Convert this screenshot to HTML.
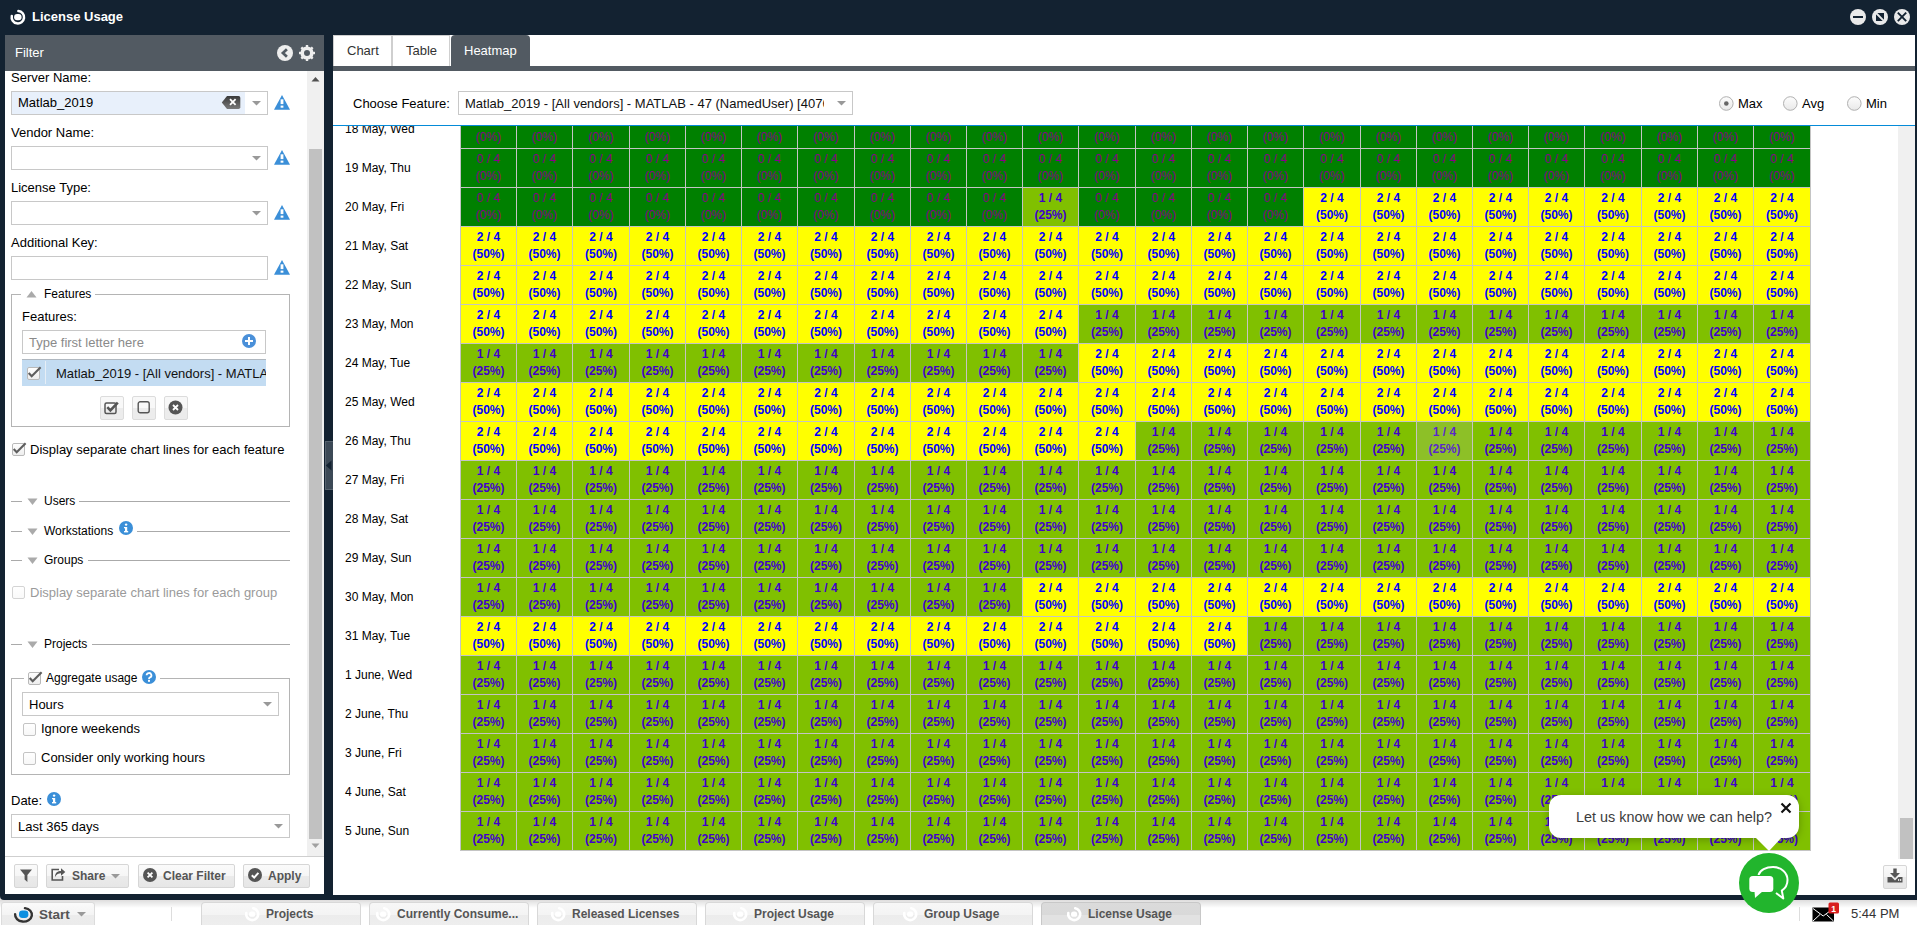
<!DOCTYPE html>
<html><head><meta charset="utf-8"><title>License Usage</title>
<style>
html,body{margin:0;padding:0}
body{width:1917px;height:925px;position:relative;overflow:hidden;background:#132231;font-family:'Liberation Sans', sans-serif}
.t{position:absolute;white-space:nowrap;font-family:'Liberation Sans', sans-serif}
.c{position:absolute;height:38px;text-align:center;font-family:'Liberation Sans', sans-serif;font-size:12px;font-weight:700;line-height:17px;padding-top:2px;box-sizing:border-box}
svg{display:block}
</style></head><body>
<svg style="position:absolute;left:0px;top:0px" width="30" height="30" viewBox="0 0 30 30">
<path d="M18.39 11.02 A6.2 6.2 0 1 1 11.79 15.91" fill="none" stroke="#fff" stroke-width="2.5" stroke-linecap="round"/>
<rect x="14.1" y="13.9" width="7.5" height="6.4" rx="3" fill="#fff"/></svg>
<div class="t" style="left:32px;top:10px;font-size:13px;line-height:13px;font-weight:700;color:#fff;">License Usage</div>
<svg style="position:absolute;left:1850px;top:9px" width="16" height="16" viewBox="0 0 16 16"><circle cx="8" cy="8" r="8" fill="#e9e9e9"/><rect x="3" y="7" width="10" height="2" fill="#132231"/></svg>
<svg style="position:absolute;left:1872px;top:9px" width="16" height="16" viewBox="0 0 16 16"><circle cx="8" cy="8" r="8" fill="#e9e9e9"/><rect x="4" y="4" width="8" height="8" fill="#132231"/><path d="M3 3 L12.6 12.6" stroke="#e9e9e9" stroke-width="1.9"/></svg>
<svg style="position:absolute;left:1894px;top:9px" width="16" height="16" viewBox="0 0 16 16"><circle cx="8" cy="8" r="8" fill="#e9e9e9"/><path d="M3.8 3.6 L12.2 12.2 M12.2 3.6 L3.8 12.2" stroke="#132231" stroke-width="1.9"/></svg>
<div style="position:absolute;left:0px;top:890px;width:12px;height:10px;background:#e4e2e2"></div>
<div style="position:absolute;left:0px;top:870px;width:12px;height:30px;background:#132231;border-bottom-left-radius:4px"></div>
<div style="position:absolute;left:5px;top:35px;width:319px;height:859px;background:#fff"></div>
<div style="position:absolute;left:5px;top:35px;width:319px;height:36px;background:#525a62"></div>
<div class="t" style="left:15px;top:46px;font-size:13px;line-height:13px;font-weight:400;color:#fff;">Filter</div>
<svg style="position:absolute;left:277px;top:45px" width="16" height="16" viewBox="0 0 16 16"><circle cx="8" cy="8" r="8" fill="#eee"/>
<path d="M9.9 4.2 L5.9 8 L9.9 11.8" fill="none" stroke="#525a62" stroke-width="2.7"/></svg>
<svg style="position:absolute;left:299px;top:45px" width="16" height="16" viewBox="0 0 16 16"><rect x="6.8" y="0" width="2.4" height="4" transform="rotate(0 8 8)" fill="#eee"/><rect x="6.8" y="0" width="2.4" height="4" transform="rotate(45 8 8)" fill="#eee"/><rect x="6.8" y="0" width="2.4" height="4" transform="rotate(90 8 8)" fill="#eee"/><rect x="6.8" y="0" width="2.4" height="4" transform="rotate(135 8 8)" fill="#eee"/><rect x="6.8" y="0" width="2.4" height="4" transform="rotate(180 8 8)" fill="#eee"/><rect x="6.8" y="0" width="2.4" height="4" transform="rotate(225 8 8)" fill="#eee"/><rect x="6.8" y="0" width="2.4" height="4" transform="rotate(270 8 8)" fill="#eee"/><rect x="6.8" y="0" width="2.4" height="4" transform="rotate(315 8 8)" fill="#eee"/><circle cx="8" cy="8" r="4.8" fill="none" stroke="#eee" stroke-width="3.6"/></svg>
<div style="position:absolute;left:307px;top:71px;width:17px;height:785px;background:#f0f0f0"></div>
<div style="position:absolute;left:309px;top:149px;width:13px;height:690px;background:#c1c1c1"></div>
<svg style="position:absolute;left:311px;top:76px" width="9" height="6"><path d="M0.5 5.5 L4.5 1 L8.5 5.5z" fill="#505050"/></svg>
<svg style="position:absolute;left:311px;top:843px" width="9" height="6"><path d="M0.5 0.5 L4.5 5 L8.5 0.5z" fill="#a0a0a0"/></svg>
<div class="t" style="left:11px;top:71px;font-size:13px;line-height:13px;font-weight:400;color:#000;">Server Name:</div>
<div style="position:absolute;left:11px;top:91px;width:255px;height:22px;border:1px solid #c8c8c8;background:#fff"></div>
<svg style="position:absolute;left:252px;top:101px" width="9" height="5"><path d="M0 0 L9 0 L4.5 4.5z" fill="#999"/></svg>
<div style="position:absolute;left:12px;top:92px;width:233px;height:22px;background:#e8f0fb"></div>
<div class="t" style="left:18px;top:96px;font-size:13px;line-height:13px;font-weight:400;color:#000;">Matlab_2019</div>
<svg style="position:absolute;left:221px;top:95px" width="20" height="15" viewBox="0 0 20 15">
<defs><linearGradient id="cg" x1="0" y1="0" x2="0" y2="1"><stop offset="0" stop-color="#3a3a3a"/><stop offset="1" stop-color="#7a7a7a"/></linearGradient></defs>
<path d="M6 1 H17.5 a1.8 1.8 0 0 1 1.8 1.8 V12.2 a1.8 1.8 0 0 1 -1.8 1.8 H6 L0.8 7.5z" fill="url(#cg)"/>
<path d="M9 4.2 L14.6 9.8 M14.6 4.2 L9 9.8" stroke="#fff" stroke-width="1.8"/></svg>
<svg style="position:absolute;left:274px;top:95px" width="16" height="16" viewBox="0 0 16 16"><path d="M8 0 L15.9 14.4 Q16 14.8 15.5 14.8 L0.5 14.8 Q0 14.8 0.1 14.4z" fill="#3b8fd8"/><rect x="6.6" y="4.3" width="2.8" height="4.8" fill="#fff"/><rect x="6.6" y="10.6" width="2.8" height="2.1" fill="#fff"/></svg>
<div class="t" style="left:11px;top:126px;font-size:13px;line-height:13px;font-weight:400;color:#000;">Vendor Name:</div>
<div style="position:absolute;left:11px;top:146px;width:255px;height:22px;border:1px solid #c8c8c8;background:#fff"></div>
<svg style="position:absolute;left:252px;top:156px" width="9" height="5"><path d="M0 0 L9 0 L4.5 4.5z" fill="#999"/></svg>
<svg style="position:absolute;left:274px;top:150px" width="16" height="16" viewBox="0 0 16 16"><path d="M8 0 L15.9 14.4 Q16 14.8 15.5 14.8 L0.5 14.8 Q0 14.8 0.1 14.4z" fill="#3b8fd8"/><rect x="6.6" y="4.3" width="2.8" height="4.8" fill="#fff"/><rect x="6.6" y="10.6" width="2.8" height="2.1" fill="#fff"/></svg>
<div class="t" style="left:11px;top:181px;font-size:13px;line-height:13px;font-weight:400;color:#000;">License Type:</div>
<div style="position:absolute;left:11px;top:201px;width:255px;height:22px;border:1px solid #c8c8c8;background:#fff"></div>
<svg style="position:absolute;left:252px;top:211px" width="9" height="5"><path d="M0 0 L9 0 L4.5 4.5z" fill="#999"/></svg>
<svg style="position:absolute;left:274px;top:205px" width="16" height="16" viewBox="0 0 16 16"><path d="M8 0 L15.9 14.4 Q16 14.8 15.5 14.8 L0.5 14.8 Q0 14.8 0.1 14.4z" fill="#3b8fd8"/><rect x="6.6" y="4.3" width="2.8" height="4.8" fill="#fff"/><rect x="6.6" y="10.6" width="2.8" height="2.1" fill="#fff"/></svg>
<div class="t" style="left:11px;top:236px;font-size:13px;line-height:13px;font-weight:400;color:#000;">Additional Key:</div>
<div style="position:absolute;left:11px;top:256px;width:255px;height:22px;border:1px solid #c8c8c8;background:#fff"></div>
<svg style="position:absolute;left:274px;top:260px" width="16" height="16" viewBox="0 0 16 16"><path d="M8 0 L15.9 14.4 Q16 14.8 15.5 14.8 L0.5 14.8 Q0 14.8 0.1 14.4z" fill="#3b8fd8"/><rect x="6.6" y="4.3" width="2.8" height="4.8" fill="#fff"/><rect x="6.6" y="10.6" width="2.8" height="2.1" fill="#fff"/></svg>
<div style="position:absolute;left:11px;top:294px;width:277px;height:131px;border:1px solid #b4b4b4"></div>
<div style="position:absolute;left:21px;top:290px;width:74px;height:8px;background:#fff"></div>
<svg style="position:absolute;left:26px;top:290px" width="11" height="8"><path d="M0.5 7.5 L5.5 1 L10.5 7.5z" fill="#aaa"/></svg>
<div class="t" style="left:44px;top:288px;font-size:12px;line-height:12px;font-weight:400;color:#000;">Features</div>
<div class="t" style="left:22px;top:310px;font-size:13px;line-height:13px;font-weight:400;color:#000;">Features:</div>
<div style="position:absolute;left:22px;top:330px;width:242px;height:22px;border:1px solid #c8c8c8;background:#fff"></div>
<div class="t" style="left:29px;top:336px;font-size:13px;line-height:13px;font-weight:400;color:#8a8a8a;">Type first letter here</div>
<svg style="position:absolute;left:242px;top:334px" width="14" height="14" viewBox="0 0 14 14"><circle cx="7" cy="7" r="7" fill="#4a90d9"/><rect x="6" y="3" width="2" height="8" fill="#fff"/><rect x="3" y="6" width="8" height="2" fill="#fff"/></svg>
<div style="position:absolute;left:22px;top:359px;width:244px;height:27px;background:#c3dcf2;border-top:1px solid #b0b8c0;box-sizing:border-box"></div>
<div style="position:absolute;left:45px;top:361px;width:1px;height:23px;background:#e6eef6"></div>
<div style="position:absolute;left:22px;top:359px;width:244px;height:27px;overflow:hidden"><div class="t" style="left:34px;top:8px;font-size:13px;line-height:13px;color:#111">Matlab_2019 - [All vendors] - MATLAB - 47 (NamedUser)</div></div>
<svg style="position:absolute;left:27px;top:365px" width="15" height="15" viewBox="0 0 15 15"><defs><linearGradient id="cbg27_367" x1="0" y1="0" x2="0" y2="1"><stop offset="0" stop-color="#fff"/><stop offset="1" stop-color="#ededed"/></linearGradient></defs><rect x="0.5" y="2.5" width="12" height="12" rx="1.5" fill="url(#cbg27_367)" stroke="#b9b9b9"/><path d="M1.7 8 L4.7 11.3 L13.6 2.3" fill="none" stroke="#5e5e5e" stroke-width="2.1"/></svg>
<div style="position:absolute;left:100px;top:396px;width:22px;height:22px;border:1px solid #dcdcdc;border-radius:2px;background:linear-gradient(#f8f8f8,#f8f8f8 50%,#ececec 50%,#ececec)"></div>
<svg style="position:absolute;left:104px;top:400px" width="16" height="15" viewBox="0 0 16 15"><rect x="1" y="3" width="11" height="10.5" rx="1.5" fill="none" stroke="#555" stroke-width="1.5"/><path d="M3.3 7.2 L6.4 10.4 L13.8 2.6" fill="none" stroke="#555" stroke-width="2.6"/></svg>
<div style="position:absolute;left:132px;top:396px;width:22px;height:22px;border:1px solid #dcdcdc;border-radius:2px;background:linear-gradient(#f8f8f8,#f8f8f8 50%,#ececec 50%,#ececec)"></div>
<svg style="position:absolute;left:137px;top:401px" width="14" height="14" viewBox="0 0 14 14"><rect x="1.2" y="0.8" width="11" height="11" rx="2" fill="none" stroke="#555" stroke-width="1.4"/></svg>
<div style="position:absolute;left:164px;top:396px;width:22px;height:22px;border:1px solid #dcdcdc;border-radius:2px;background:linear-gradient(#f8f8f8,#f8f8f8 50%,#ececec 50%,#ececec)"></div>
<svg style="position:absolute;left:168px;top:400px" width="15" height="15" viewBox="0 0 15 15"><circle cx="7.5" cy="7.5" r="7" fill="#555"/><path d="M5 5 L10 10 M10 5 L5 10" stroke="#fff" stroke-width="1.8"/></svg>
<svg style="position:absolute;left:12px;top:441px" width="15" height="15" viewBox="0 0 15 15"><defs><linearGradient id="cbg12_443" x1="0" y1="0" x2="0" y2="1"><stop offset="0" stop-color="#fff"/><stop offset="1" stop-color="#ededed"/></linearGradient></defs><rect x="0.5" y="2.5" width="12" height="12" rx="1.5" fill="url(#cbg12_443)" stroke="#b9b9b9"/><path d="M1.7 8 L4.7 11.3 L13.6 2.3" fill="none" stroke="#5e5e5e" stroke-width="2.1"/></svg>
<div class="t" style="left:30px;top:443px;font-size:13px;line-height:13px;font-weight:400;color:#000;">Display separate chart lines for each feature</div>
<div style="position:absolute;left:11px;top:501px;width:11px;height:1px;background:#aaa"></div>
<svg style="position:absolute;left:27px;top:498px" width="11" height="8"><path d="M0.5 0.5 L10.5 0.5 L5.5 7z" fill="#aaa"/></svg>
<div class="t" style="left:44px;top:495px;font-size:12px;line-height:12px;font-weight:400;color:#000;">Users</div>
<div style="position:absolute;left:79px;top:501px;width:211px;height:1px;background:#aaa"></div>
<div style="position:absolute;left:11px;top:531px;width:11px;height:1px;background:#aaa"></div>
<svg style="position:absolute;left:27px;top:528px" width="11" height="8"><path d="M0.5 0.5 L10.5 0.5 L5.5 7z" fill="#aaa"/></svg>
<div class="t" style="left:44px;top:525px;font-size:12px;line-height:12px;font-weight:400;color:#000;">Workstations</div>
<svg style="position:absolute;left:119px;top:521px" width="14" height="14" viewBox="0 0 14 14"><circle cx="7" cy="7" r="7" fill="#3b8fd8"/><rect x="6" y="6" width="2.2" height="5" fill="#fff"/><rect x="5" y="10" width="4.2" height="1.4" fill="#fff"/><rect x="5" y="6" width="3" height="1.3" fill="#fff"/><circle cx="7.1" cy="3.6" r="1.2" fill="#fff"/></svg>
<div style="position:absolute;left:137px;top:531px;width:153px;height:1px;background:#aaa"></div>
<div style="position:absolute;left:11px;top:560px;width:11px;height:1px;background:#aaa"></div>
<svg style="position:absolute;left:27px;top:557px" width="11" height="8"><path d="M0.5 0.5 L10.5 0.5 L5.5 7z" fill="#aaa"/></svg>
<div class="t" style="left:44px;top:554px;font-size:12px;line-height:12px;font-weight:400;color:#000;">Groups</div>
<div style="position:absolute;left:88px;top:560px;width:202px;height:1px;background:#aaa"></div>
<svg style="position:absolute;left:12px;top:584px" width="15" height="15" viewBox="0 0 15 15"><defs><linearGradient id="cbg12_586" x1="0" y1="0" x2="0" y2="1"><stop offset="0" stop-color="#fff"/><stop offset="1" stop-color="#f9f9f9"/></linearGradient></defs><rect x="0.5" y="2.5" width="12" height="12" rx="1.5" fill="url(#cbg12_586)" stroke="#d4d4d4"/></svg>
<div class="t" style="left:30px;top:586px;font-size:13px;line-height:13px;font-weight:400;color:#9a9a9a;">Display separate chart lines for each group</div>
<div style="position:absolute;left:11px;top:644px;width:11px;height:1px;background:#aaa"></div>
<svg style="position:absolute;left:27px;top:641px" width="11" height="8"><path d="M0.5 0.5 L10.5 0.5 L5.5 7z" fill="#aaa"/></svg>
<div class="t" style="left:44px;top:638px;font-size:12px;line-height:12px;font-weight:400;color:#000;">Projects</div>
<div style="position:absolute;left:92px;top:644px;width:198px;height:1px;background:#aaa"></div>
<div style="position:absolute;left:11px;top:678px;width:277px;height:95px;border:1px solid #b4b4b4"></div>
<div style="position:absolute;left:24px;top:670px;width:136px;height:16px;background:#fff"></div>
<svg style="position:absolute;left:28px;top:670px" width="15" height="15" viewBox="0 0 15 15"><defs><linearGradient id="cbg28_672" x1="0" y1="0" x2="0" y2="1"><stop offset="0" stop-color="#fff"/><stop offset="1" stop-color="#ededed"/></linearGradient></defs><rect x="0.5" y="2.5" width="12" height="12" rx="1.5" fill="url(#cbg28_672)" stroke="#b9b9b9"/><path d="M1.7 8 L4.7 11.3 L13.6 2.3" fill="none" stroke="#5e5e5e" stroke-width="2.1"/></svg>
<div class="t" style="left:46px;top:672px;font-size:12px;line-height:12px;font-weight:400;color:#000;">Aggregate usage</div>
<svg style="position:absolute;left:142px;top:670px" width="14" height="14" viewBox="0 0 14 14"><circle cx="7" cy="7" r="7" fill="#3b8fd8"/><path d="M4.6 5.3 a2.4 2.3 0 1 1 3.4 2.1 c-0.8 0.4 -1 0.8 -1 1.6" fill="none" stroke="#fff" stroke-width="1.8"/><rect x="6" y="9.8" width="2" height="2" fill="#fff"/></svg>
<div style="position:absolute;left:22px;top:692px;width:255px;height:22px;border:1px solid #c8c8c8;background:#fff"></div>
<svg style="position:absolute;left:263px;top:702px" width="9" height="5"><path d="M0 0 L9 0 L4.5 4.5z" fill="#999"/></svg>
<div class="t" style="left:29px;top:698px;font-size:13px;line-height:13px;font-weight:400;color:#000;">Hours</div>
<svg style="position:absolute;left:23px;top:721px" width="15" height="15" viewBox="0 0 15 15"><defs><linearGradient id="cbg23_723" x1="0" y1="0" x2="0" y2="1"><stop offset="0" stop-color="#fff"/><stop offset="1" stop-color="#f7f7f7"/></linearGradient></defs><rect x="0.5" y="2.5" width="12" height="12" rx="1.5" fill="url(#cbg23_723)" stroke="#c4c4c4"/></svg>
<div class="t" style="left:41px;top:722px;font-size:13px;line-height:13px;font-weight:400;color:#000;">Ignore weekends</div>
<svg style="position:absolute;left:23px;top:750px" width="15" height="15" viewBox="0 0 15 15"><defs><linearGradient id="cbg23_752" x1="0" y1="0" x2="0" y2="1"><stop offset="0" stop-color="#fff"/><stop offset="1" stop-color="#f7f7f7"/></linearGradient></defs><rect x="0.5" y="2.5" width="12" height="12" rx="1.5" fill="url(#cbg23_752)" stroke="#c4c4c4"/></svg>
<div class="t" style="left:41px;top:751px;font-size:13px;line-height:13px;font-weight:400;color:#000;">Consider only working hours</div>
<div class="t" style="left:11px;top:794px;font-size:13px;line-height:13px;font-weight:400;color:#000;">Date:</div>
<svg style="position:absolute;left:47px;top:792px" width="14" height="14" viewBox="0 0 14 14"><circle cx="7" cy="7" r="7" fill="#3b8fd8"/><rect x="6" y="6" width="2.2" height="5" fill="#fff"/><rect x="5" y="10" width="4.2" height="1.4" fill="#fff"/><rect x="5" y="6" width="3" height="1.3" fill="#fff"/><circle cx="7.1" cy="3.6" r="1.2" fill="#fff"/></svg>
<div style="position:absolute;left:11px;top:814px;width:277px;height:22px;border:1px solid #c8c8c8;background:#fff"></div>
<svg style="position:absolute;left:274px;top:824px" width="9" height="5"><path d="M0 0 L9 0 L4.5 4.5z" fill="#999"/></svg>
<div class="t" style="left:18px;top:820px;font-size:13px;line-height:13px;font-weight:400;color:#000;">Last 365 days</div>
<div style="position:absolute;left:5px;top:856px;width:319px;height:1px;background:#cfcfcf"></div>
<div style="position:absolute;left:14px;top:864px;width:22px;height:22px;border:1px solid #d6d6d6;border-radius:2px;background:linear-gradient(#fafafa,#f6f6f6 50%,#ebebeb 50%,#e6e6e6)"></div>
<svg style="position:absolute;left:19px;top:868px" width="14" height="15" viewBox="0 0 14 15"><path d="M1 1.5 H13 L8.4 7 V14 L5.6 11.4 V7z" fill="#555"/></svg>
<div style="position:absolute;left:46px;top:864px;width:81px;height:22px;border:1px solid #d6d6d6;border-radius:2px;background:linear-gradient(#fafafa,#f6f6f6 50%,#ebebeb 50%,#e6e6e6)"></div>
<svg style="position:absolute;left:50px;top:866px" width="16" height="16" viewBox="0 0 16 16"><path d="M9 3.5 H2.2 V14 H12.5 V10" fill="none" stroke="#555" stroke-width="1.6"/><path d="M5 11 C5 6.5 8 5 11 5 V2.3 L15.3 6 L11 9.7 V7.2 C8.5 7.2 6.5 8 5 11z" fill="#555"/></svg>
<div class="t" style="left:72px;top:870px;font-size:12px;line-height:12px;font-weight:700;color:#555;">Share</div>
<svg style="position:absolute;left:111px;top:874px" width="9" height="5"><path d="M0 0 L9 0 L4.5 4.5z" fill="#999"/></svg>
<div style="position:absolute;left:138px;top:864px;width:95px;height:22px;border:1px solid #d6d6d6;border-radius:2px;background:linear-gradient(#fafafa,#f6f6f6 50%,#ebebeb 50%,#e6e6e6)"></div>
<svg style="position:absolute;left:143px;top:868px" width="14" height="14" viewBox="0 0 14 14"><circle cx="7" cy="7" r="7" fill="#555"/><path d="M4.6 4.6 L9.4 9.4 M9.4 4.6 L4.6 9.4" stroke="#fff" stroke-width="1.8"/></svg>
<div class="t" style="left:163px;top:870px;font-size:12px;line-height:12px;font-weight:700;color:#555;">Clear Filter</div>
<div style="position:absolute;left:243px;top:864px;width:65px;height:22px;border:1px solid #d6d6d6;border-radius:2px;background:linear-gradient(#fafafa,#f6f6f6 50%,#ebebeb 50%,#e6e6e6)"></div>
<svg style="position:absolute;left:248px;top:868px" width="14" height="14" viewBox="0 0 14 14"><circle cx="7" cy="7" r="7" fill="#555"/><path d="M3.8 7.2 L6.2 9.6 L10.4 4.8" fill="none" stroke="#fff" stroke-width="2"/></svg>
<div class="t" style="left:268px;top:870px;font-size:12px;line-height:12px;font-weight:700;color:#555;">Apply</div>
<div style="position:absolute;left:325px;top:441px;width:7px;height:47px;background:#3c4956;border:1px solid #56626e;border-right:none"></div>
<svg style="position:absolute;left:325px;top:460px" width="7" height="11"><path d="M6.5 0.5 L0.8 5.5 L6.5 10.5z" fill="#132231"/></svg>
<div style="position:absolute;left:333px;top:35px;width:1582px;height:860px;background:#fff"></div>
<div style="position:absolute;left:333px;top:35px;width:57px;height:31px;border:1px solid #cfcfcf;border-bottom:none;background:#fff"></div>
<div class="t" style="left:347px;top:44px;font-size:13px;line-height:13px;font-weight:400;color:#333;">Chart</div>
<div style="position:absolute;left:392px;top:35px;width:56px;height:31px;border:1px solid #cfcfcf;border-bottom:none;background:#fff"></div>
<div class="t" style="left:406px;top:44px;font-size:13px;line-height:13px;font-weight:400;color:#333;">Table</div>
<div style="position:absolute;left:451px;top:35px;width:79px;height:31px;background:#525a62;border-radius:4px 4px 0 0"></div>
<div class="t" style="left:464px;top:44px;font-size:13px;line-height:13px;font-weight:400;color:#fff;">Heatmap</div>
<div style="position:absolute;left:333px;top:66px;width:1582px;height:5px;background:#525a62"></div>
<div class="t" style="left:353px;top:97px;font-size:13px;line-height:13px;font-weight:400;color:#000;">Choose Feature:</div>
<div style="position:absolute;left:458px;top:91px;width:393px;height:22px;border:1px solid #c8c8c8;background:#fff"></div>
<div style="position:absolute;left:459px;top:92px;width:365px;height:22px;overflow:hidden"><div class="t" style="left:6px;top:5px;font-size:13px;line-height:13px;color:#111">Matlab_2019 - [All vendors] - MATLAB - 47 (NamedUser) [4076]</div></div>
<svg style="position:absolute;left:837px;top:101px" width="9" height="5"><path d="M0 0 L9 0 L4.5 4.5z" fill="#999"/></svg>
<svg style="position:absolute;left:1719px;top:96px" width="15" height="15" viewBox="0 0 15 15"><defs><linearGradient id="rg" x1="0" y1="0" x2="0" y2="1"><stop offset="0" stop-color="#fdfdfd"/><stop offset="1" stop-color="#e9e9e9"/></linearGradient></defs><circle cx="7.3" cy="7.5" r="6.8" fill="url(#rg)" stroke="#b0b0b0"/><circle cx="7.3" cy="7.5" r="2.3" fill="#666"/></svg>
<div class="t" style="left:1738px;top:97px;font-size:13px;line-height:13px;font-weight:400;color:#000;">Max</div>
<svg style="position:absolute;left:1783px;top:96px" width="15" height="15" viewBox="0 0 15 15"><defs><linearGradient id="rg" x1="0" y1="0" x2="0" y2="1"><stop offset="0" stop-color="#fdfdfd"/><stop offset="1" stop-color="#e9e9e9"/></linearGradient></defs><circle cx="7.3" cy="7.5" r="6.8" fill="url(#rg)" stroke="#b0b0b0"/></svg>
<div class="t" style="left:1802px;top:97px;font-size:13px;line-height:13px;font-weight:400;color:#000;">Avg</div>
<svg style="position:absolute;left:1847px;top:96px" width="15" height="15" viewBox="0 0 15 15"><defs><linearGradient id="rg" x1="0" y1="0" x2="0" y2="1"><stop offset="0" stop-color="#fdfdfd"/><stop offset="1" stop-color="#e9e9e9"/></linearGradient></defs><circle cx="7.3" cy="7.5" r="6.8" fill="url(#rg)" stroke="#b0b0b0"/></svg>
<div class="t" style="left:1866px;top:97px;font-size:13px;line-height:13px;font-weight:400;color:#000;">Min</div>
<div style="position:absolute;left:333px;top:125px;width:1582px;height:1px;background:#058bd8"></div>
<div style="position:absolute;left:333px;top:126px;width:1582px;height:733px;overflow:hidden">
<div style="position:absolute;left:127px;top:-17px;width:1351px;height:742px;background:#c4c4c4"></div>
<div class="t" style="left:12px;top:-3px;font-size:12px;line-height:12px;font-weight:400;color:#000;">18 May, Wed</div>
<div class="c" style="left:128px;top:-16px;width:55px;background:#008000;color:#8a008a;font-weight:400">0 / 4<br>(0%)</div>
<div class="c" style="left:184px;top:-16px;width:55px;background:#008000;color:#8a008a;font-weight:400">0 / 4<br>(0%)</div>
<div class="c" style="left:240px;top:-16px;width:56px;background:#008000;color:#8a008a;font-weight:400">0 / 4<br>(0%)</div>
<div class="c" style="left:297px;top:-16px;width:55px;background:#008000;color:#8a008a;font-weight:400">0 / 4<br>(0%)</div>
<div class="c" style="left:353px;top:-16px;width:55px;background:#008000;color:#8a008a;font-weight:400">0 / 4<br>(0%)</div>
<div class="c" style="left:409px;top:-16px;width:55px;background:#008000;color:#8a008a;font-weight:400">0 / 4<br>(0%)</div>
<div class="c" style="left:465px;top:-16px;width:56px;background:#008000;color:#8a008a;font-weight:400">0 / 4<br>(0%)</div>
<div class="c" style="left:522px;top:-16px;width:55px;background:#008000;color:#8a008a;font-weight:400">0 / 4<br>(0%)</div>
<div class="c" style="left:578px;top:-16px;width:55px;background:#008000;color:#8a008a;font-weight:400">0 / 4<br>(0%)</div>
<div class="c" style="left:634px;top:-16px;width:55px;background:#008000;color:#8a008a;font-weight:400">0 / 4<br>(0%)</div>
<div class="c" style="left:690px;top:-16px;width:55px;background:#008000;color:#8a008a;font-weight:400">0 / 4<br>(0%)</div>
<div class="c" style="left:746px;top:-16px;width:56px;background:#008000;color:#8a008a;font-weight:400">0 / 4<br>(0%)</div>
<div class="c" style="left:803px;top:-16px;width:55px;background:#008000;color:#8a008a;font-weight:400">0 / 4<br>(0%)</div>
<div class="c" style="left:859px;top:-16px;width:55px;background:#008000;color:#8a008a;font-weight:400">0 / 4<br>(0%)</div>
<div class="c" style="left:915px;top:-16px;width:55px;background:#008000;color:#8a008a;font-weight:400">0 / 4<br>(0%)</div>
<div class="c" style="left:971px;top:-16px;width:56px;background:#008000;color:#8a008a;font-weight:400">0 / 4<br>(0%)</div>
<div class="c" style="left:1028px;top:-16px;width:55px;background:#008000;color:#8a008a;font-weight:400">0 / 4<br>(0%)</div>
<div class="c" style="left:1084px;top:-16px;width:55px;background:#008000;color:#8a008a;font-weight:400">0 / 4<br>(0%)</div>
<div class="c" style="left:1140px;top:-16px;width:55px;background:#008000;color:#8a008a;font-weight:400">0 / 4<br>(0%)</div>
<div class="c" style="left:1196px;top:-16px;width:55px;background:#008000;color:#8a008a;font-weight:400">0 / 4<br>(0%)</div>
<div class="c" style="left:1252px;top:-16px;width:56px;background:#008000;color:#8a008a;font-weight:400">0 / 4<br>(0%)</div>
<div class="c" style="left:1309px;top:-16px;width:55px;background:#008000;color:#8a008a;font-weight:400">0 / 4<br>(0%)</div>
<div class="c" style="left:1365px;top:-16px;width:55px;background:#008000;color:#8a008a;font-weight:400">0 / 4<br>(0%)</div>
<div class="c" style="left:1421px;top:-16px;width:56px;background:#008000;color:#8a008a;font-weight:400">0 / 4<br>(0%)</div>
<div class="t" style="left:12px;top:36px;font-size:12px;line-height:12px;font-weight:400;color:#000;">19 May, Thu</div>
<div class="c" style="left:128px;top:23px;width:55px;background:#008000;color:#8a008a;font-weight:400">0 / 4<br>(0%)</div>
<div class="c" style="left:184px;top:23px;width:55px;background:#008000;color:#8a008a;font-weight:400">0 / 4<br>(0%)</div>
<div class="c" style="left:240px;top:23px;width:56px;background:#008000;color:#8a008a;font-weight:400">0 / 4<br>(0%)</div>
<div class="c" style="left:297px;top:23px;width:55px;background:#008000;color:#8a008a;font-weight:400">0 / 4<br>(0%)</div>
<div class="c" style="left:353px;top:23px;width:55px;background:#008000;color:#8a008a;font-weight:400">0 / 4<br>(0%)</div>
<div class="c" style="left:409px;top:23px;width:55px;background:#008000;color:#8a008a;font-weight:400">0 / 4<br>(0%)</div>
<div class="c" style="left:465px;top:23px;width:56px;background:#008000;color:#8a008a;font-weight:400">0 / 4<br>(0%)</div>
<div class="c" style="left:522px;top:23px;width:55px;background:#008000;color:#8a008a;font-weight:400">0 / 4<br>(0%)</div>
<div class="c" style="left:578px;top:23px;width:55px;background:#008000;color:#8a008a;font-weight:400">0 / 4<br>(0%)</div>
<div class="c" style="left:634px;top:23px;width:55px;background:#008000;color:#8a008a;font-weight:400">0 / 4<br>(0%)</div>
<div class="c" style="left:690px;top:23px;width:55px;background:#008000;color:#8a008a;font-weight:400">0 / 4<br>(0%)</div>
<div class="c" style="left:746px;top:23px;width:56px;background:#008000;color:#8a008a;font-weight:400">0 / 4<br>(0%)</div>
<div class="c" style="left:803px;top:23px;width:55px;background:#008000;color:#8a008a;font-weight:400">0 / 4<br>(0%)</div>
<div class="c" style="left:859px;top:23px;width:55px;background:#008000;color:#8a008a;font-weight:400">0 / 4<br>(0%)</div>
<div class="c" style="left:915px;top:23px;width:55px;background:#008000;color:#8a008a;font-weight:400">0 / 4<br>(0%)</div>
<div class="c" style="left:971px;top:23px;width:56px;background:#008000;color:#8a008a;font-weight:400">0 / 4<br>(0%)</div>
<div class="c" style="left:1028px;top:23px;width:55px;background:#008000;color:#8a008a;font-weight:400">0 / 4<br>(0%)</div>
<div class="c" style="left:1084px;top:23px;width:55px;background:#008000;color:#8a008a;font-weight:400">0 / 4<br>(0%)</div>
<div class="c" style="left:1140px;top:23px;width:55px;background:#008000;color:#8a008a;font-weight:400">0 / 4<br>(0%)</div>
<div class="c" style="left:1196px;top:23px;width:55px;background:#008000;color:#8a008a;font-weight:400">0 / 4<br>(0%)</div>
<div class="c" style="left:1252px;top:23px;width:56px;background:#008000;color:#8a008a;font-weight:400">0 / 4<br>(0%)</div>
<div class="c" style="left:1309px;top:23px;width:55px;background:#008000;color:#8a008a;font-weight:400">0 / 4<br>(0%)</div>
<div class="c" style="left:1365px;top:23px;width:55px;background:#008000;color:#8a008a;font-weight:400">0 / 4<br>(0%)</div>
<div class="c" style="left:1421px;top:23px;width:56px;background:#008000;color:#8a008a;font-weight:400">0 / 4<br>(0%)</div>
<div class="t" style="left:12px;top:75px;font-size:12px;line-height:12px;font-weight:400;color:#000;">20 May, Fri</div>
<div class="c" style="left:128px;top:62px;width:55px;background:#008000;color:#8a008a;font-weight:400">0 / 4<br>(0%)</div>
<div class="c" style="left:184px;top:62px;width:55px;background:#008000;color:#8a008a;font-weight:400">0 / 4<br>(0%)</div>
<div class="c" style="left:240px;top:62px;width:56px;background:#008000;color:#8a008a;font-weight:400">0 / 4<br>(0%)</div>
<div class="c" style="left:297px;top:62px;width:55px;background:#008000;color:#8a008a;font-weight:400">0 / 4<br>(0%)</div>
<div class="c" style="left:353px;top:62px;width:55px;background:#008000;color:#8a008a;font-weight:400">0 / 4<br>(0%)</div>
<div class="c" style="left:409px;top:62px;width:55px;background:#008000;color:#8a008a;font-weight:400">0 / 4<br>(0%)</div>
<div class="c" style="left:465px;top:62px;width:56px;background:#008000;color:#8a008a;font-weight:400">0 / 4<br>(0%)</div>
<div class="c" style="left:522px;top:62px;width:55px;background:#008000;color:#8a008a;font-weight:400">0 / 4<br>(0%)</div>
<div class="c" style="left:578px;top:62px;width:55px;background:#008000;color:#8a008a;font-weight:400">0 / 4<br>(0%)</div>
<div class="c" style="left:634px;top:62px;width:55px;background:#008000;color:#8a008a;font-weight:400">0 / 4<br>(0%)</div>
<div class="c" style="left:690px;top:62px;width:55px;background:#80c000;color:#4000cc">1 / 4<br>(25%)</div>
<div class="c" style="left:746px;top:62px;width:56px;background:#008000;color:#8a008a;font-weight:400">0 / 4<br>(0%)</div>
<div class="c" style="left:803px;top:62px;width:55px;background:#008000;color:#8a008a;font-weight:400">0 / 4<br>(0%)</div>
<div class="c" style="left:859px;top:62px;width:55px;background:#008000;color:#8a008a;font-weight:400">0 / 4<br>(0%)</div>
<div class="c" style="left:915px;top:62px;width:55px;background:#008000;color:#8a008a;font-weight:400">0 / 4<br>(0%)</div>
<div class="c" style="left:971px;top:62px;width:56px;background:#ffff00;color:#0000ff">2 / 4<br>(50%)</div>
<div class="c" style="left:1028px;top:62px;width:55px;background:#ffff00;color:#0000ff">2 / 4<br>(50%)</div>
<div class="c" style="left:1084px;top:62px;width:55px;background:#ffff00;color:#0000ff">2 / 4<br>(50%)</div>
<div class="c" style="left:1140px;top:62px;width:55px;background:#ffff00;color:#0000ff">2 / 4<br>(50%)</div>
<div class="c" style="left:1196px;top:62px;width:55px;background:#ffff00;color:#0000ff">2 / 4<br>(50%)</div>
<div class="c" style="left:1252px;top:62px;width:56px;background:#ffff00;color:#0000ff">2 / 4<br>(50%)</div>
<div class="c" style="left:1309px;top:62px;width:55px;background:#ffff00;color:#0000ff">2 / 4<br>(50%)</div>
<div class="c" style="left:1365px;top:62px;width:55px;background:#ffff00;color:#0000ff">2 / 4<br>(50%)</div>
<div class="c" style="left:1421px;top:62px;width:56px;background:#ffff00;color:#0000ff">2 / 4<br>(50%)</div>
<div class="t" style="left:12px;top:114px;font-size:12px;line-height:12px;font-weight:400;color:#000;">21 May, Sat</div>
<div class="c" style="left:128px;top:101px;width:55px;background:#ffff00;color:#0000ff">2 / 4<br>(50%)</div>
<div class="c" style="left:184px;top:101px;width:55px;background:#ffff00;color:#0000ff">2 / 4<br>(50%)</div>
<div class="c" style="left:240px;top:101px;width:56px;background:#ffff00;color:#0000ff">2 / 4<br>(50%)</div>
<div class="c" style="left:297px;top:101px;width:55px;background:#ffff00;color:#0000ff">2 / 4<br>(50%)</div>
<div class="c" style="left:353px;top:101px;width:55px;background:#ffff00;color:#0000ff">2 / 4<br>(50%)</div>
<div class="c" style="left:409px;top:101px;width:55px;background:#ffff00;color:#0000ff">2 / 4<br>(50%)</div>
<div class="c" style="left:465px;top:101px;width:56px;background:#ffff00;color:#0000ff">2 / 4<br>(50%)</div>
<div class="c" style="left:522px;top:101px;width:55px;background:#ffff00;color:#0000ff">2 / 4<br>(50%)</div>
<div class="c" style="left:578px;top:101px;width:55px;background:#ffff00;color:#0000ff">2 / 4<br>(50%)</div>
<div class="c" style="left:634px;top:101px;width:55px;background:#ffff00;color:#0000ff">2 / 4<br>(50%)</div>
<div class="c" style="left:690px;top:101px;width:55px;background:#ffff00;color:#0000ff">2 / 4<br>(50%)</div>
<div class="c" style="left:746px;top:101px;width:56px;background:#ffff00;color:#0000ff">2 / 4<br>(50%)</div>
<div class="c" style="left:803px;top:101px;width:55px;background:#ffff00;color:#0000ff">2 / 4<br>(50%)</div>
<div class="c" style="left:859px;top:101px;width:55px;background:#ffff00;color:#0000ff">2 / 4<br>(50%)</div>
<div class="c" style="left:915px;top:101px;width:55px;background:#ffff00;color:#0000ff">2 / 4<br>(50%)</div>
<div class="c" style="left:971px;top:101px;width:56px;background:#ffff00;color:#0000ff">2 / 4<br>(50%)</div>
<div class="c" style="left:1028px;top:101px;width:55px;background:#ffff00;color:#0000ff">2 / 4<br>(50%)</div>
<div class="c" style="left:1084px;top:101px;width:55px;background:#ffff00;color:#0000ff">2 / 4<br>(50%)</div>
<div class="c" style="left:1140px;top:101px;width:55px;background:#ffff00;color:#0000ff">2 / 4<br>(50%)</div>
<div class="c" style="left:1196px;top:101px;width:55px;background:#ffff00;color:#0000ff">2 / 4<br>(50%)</div>
<div class="c" style="left:1252px;top:101px;width:56px;background:#ffff00;color:#0000ff">2 / 4<br>(50%)</div>
<div class="c" style="left:1309px;top:101px;width:55px;background:#ffff00;color:#0000ff">2 / 4<br>(50%)</div>
<div class="c" style="left:1365px;top:101px;width:55px;background:#ffff00;color:#0000ff">2 / 4<br>(50%)</div>
<div class="c" style="left:1421px;top:101px;width:56px;background:#ffff00;color:#0000ff">2 / 4<br>(50%)</div>
<div class="t" style="left:12px;top:153px;font-size:12px;line-height:12px;font-weight:400;color:#000;">22 May, Sun</div>
<div class="c" style="left:128px;top:140px;width:55px;background:#ffff00;color:#0000ff">2 / 4<br>(50%)</div>
<div class="c" style="left:184px;top:140px;width:55px;background:#ffff00;color:#0000ff">2 / 4<br>(50%)</div>
<div class="c" style="left:240px;top:140px;width:56px;background:#ffff00;color:#0000ff">2 / 4<br>(50%)</div>
<div class="c" style="left:297px;top:140px;width:55px;background:#ffff00;color:#0000ff">2 / 4<br>(50%)</div>
<div class="c" style="left:353px;top:140px;width:55px;background:#ffff00;color:#0000ff">2 / 4<br>(50%)</div>
<div class="c" style="left:409px;top:140px;width:55px;background:#ffff00;color:#0000ff">2 / 4<br>(50%)</div>
<div class="c" style="left:465px;top:140px;width:56px;background:#ffff00;color:#0000ff">2 / 4<br>(50%)</div>
<div class="c" style="left:522px;top:140px;width:55px;background:#ffff00;color:#0000ff">2 / 4<br>(50%)</div>
<div class="c" style="left:578px;top:140px;width:55px;background:#ffff00;color:#0000ff">2 / 4<br>(50%)</div>
<div class="c" style="left:634px;top:140px;width:55px;background:#ffff00;color:#0000ff">2 / 4<br>(50%)</div>
<div class="c" style="left:690px;top:140px;width:55px;background:#ffff00;color:#0000ff">2 / 4<br>(50%)</div>
<div class="c" style="left:746px;top:140px;width:56px;background:#ffff00;color:#0000ff">2 / 4<br>(50%)</div>
<div class="c" style="left:803px;top:140px;width:55px;background:#ffff00;color:#0000ff">2 / 4<br>(50%)</div>
<div class="c" style="left:859px;top:140px;width:55px;background:#ffff00;color:#0000ff">2 / 4<br>(50%)</div>
<div class="c" style="left:915px;top:140px;width:55px;background:#ffff00;color:#0000ff">2 / 4<br>(50%)</div>
<div class="c" style="left:971px;top:140px;width:56px;background:#ffff00;color:#0000ff">2 / 4<br>(50%)</div>
<div class="c" style="left:1028px;top:140px;width:55px;background:#ffff00;color:#0000ff">2 / 4<br>(50%)</div>
<div class="c" style="left:1084px;top:140px;width:55px;background:#ffff00;color:#0000ff">2 / 4<br>(50%)</div>
<div class="c" style="left:1140px;top:140px;width:55px;background:#ffff00;color:#0000ff">2 / 4<br>(50%)</div>
<div class="c" style="left:1196px;top:140px;width:55px;background:#ffff00;color:#0000ff">2 / 4<br>(50%)</div>
<div class="c" style="left:1252px;top:140px;width:56px;background:#ffff00;color:#0000ff">2 / 4<br>(50%)</div>
<div class="c" style="left:1309px;top:140px;width:55px;background:#ffff00;color:#0000ff">2 / 4<br>(50%)</div>
<div class="c" style="left:1365px;top:140px;width:55px;background:#ffff00;color:#0000ff">2 / 4<br>(50%)</div>
<div class="c" style="left:1421px;top:140px;width:56px;background:#ffff00;color:#0000ff">2 / 4<br>(50%)</div>
<div class="t" style="left:12px;top:192px;font-size:12px;line-height:12px;font-weight:400;color:#000;">23 May, Mon</div>
<div class="c" style="left:128px;top:179px;width:55px;background:#ffff00;color:#0000ff">2 / 4<br>(50%)</div>
<div class="c" style="left:184px;top:179px;width:55px;background:#ffff00;color:#0000ff">2 / 4<br>(50%)</div>
<div class="c" style="left:240px;top:179px;width:56px;background:#ffff00;color:#0000ff">2 / 4<br>(50%)</div>
<div class="c" style="left:297px;top:179px;width:55px;background:#ffff00;color:#0000ff">2 / 4<br>(50%)</div>
<div class="c" style="left:353px;top:179px;width:55px;background:#ffff00;color:#0000ff">2 / 4<br>(50%)</div>
<div class="c" style="left:409px;top:179px;width:55px;background:#ffff00;color:#0000ff">2 / 4<br>(50%)</div>
<div class="c" style="left:465px;top:179px;width:56px;background:#ffff00;color:#0000ff">2 / 4<br>(50%)</div>
<div class="c" style="left:522px;top:179px;width:55px;background:#ffff00;color:#0000ff">2 / 4<br>(50%)</div>
<div class="c" style="left:578px;top:179px;width:55px;background:#ffff00;color:#0000ff">2 / 4<br>(50%)</div>
<div class="c" style="left:634px;top:179px;width:55px;background:#ffff00;color:#0000ff">2 / 4<br>(50%)</div>
<div class="c" style="left:690px;top:179px;width:55px;background:#ffff00;color:#0000ff">2 / 4<br>(50%)</div>
<div class="c" style="left:746px;top:179px;width:56px;background:#80c000;color:#4000cc">1 / 4<br>(25%)</div>
<div class="c" style="left:803px;top:179px;width:55px;background:#80c000;color:#4000cc">1 / 4<br>(25%)</div>
<div class="c" style="left:859px;top:179px;width:55px;background:#80c000;color:#4000cc">1 / 4<br>(25%)</div>
<div class="c" style="left:915px;top:179px;width:55px;background:#80c000;color:#4000cc">1 / 4<br>(25%)</div>
<div class="c" style="left:971px;top:179px;width:56px;background:#80c000;color:#4000cc">1 / 4<br>(25%)</div>
<div class="c" style="left:1028px;top:179px;width:55px;background:#80c000;color:#4000cc">1 / 4<br>(25%)</div>
<div class="c" style="left:1084px;top:179px;width:55px;background:#80c000;color:#4000cc">1 / 4<br>(25%)</div>
<div class="c" style="left:1140px;top:179px;width:55px;background:#80c000;color:#4000cc">1 / 4<br>(25%)</div>
<div class="c" style="left:1196px;top:179px;width:55px;background:#80c000;color:#4000cc">1 / 4<br>(25%)</div>
<div class="c" style="left:1252px;top:179px;width:56px;background:#80c000;color:#4000cc">1 / 4<br>(25%)</div>
<div class="c" style="left:1309px;top:179px;width:55px;background:#80c000;color:#4000cc">1 / 4<br>(25%)</div>
<div class="c" style="left:1365px;top:179px;width:55px;background:#80c000;color:#4000cc">1 / 4<br>(25%)</div>
<div class="c" style="left:1421px;top:179px;width:56px;background:#80c000;color:#4000cc">1 / 4<br>(25%)</div>
<div class="t" style="left:12px;top:231px;font-size:12px;line-height:12px;font-weight:400;color:#000;">24 May, Tue</div>
<div class="c" style="left:128px;top:218px;width:55px;background:#80c000;color:#4000cc">1 / 4<br>(25%)</div>
<div class="c" style="left:184px;top:218px;width:55px;background:#80c000;color:#4000cc">1 / 4<br>(25%)</div>
<div class="c" style="left:240px;top:218px;width:56px;background:#80c000;color:#4000cc">1 / 4<br>(25%)</div>
<div class="c" style="left:297px;top:218px;width:55px;background:#80c000;color:#4000cc">1 / 4<br>(25%)</div>
<div class="c" style="left:353px;top:218px;width:55px;background:#80c000;color:#4000cc">1 / 4<br>(25%)</div>
<div class="c" style="left:409px;top:218px;width:55px;background:#80c000;color:#4000cc">1 / 4<br>(25%)</div>
<div class="c" style="left:465px;top:218px;width:56px;background:#80c000;color:#4000cc">1 / 4<br>(25%)</div>
<div class="c" style="left:522px;top:218px;width:55px;background:#80c000;color:#4000cc">1 / 4<br>(25%)</div>
<div class="c" style="left:578px;top:218px;width:55px;background:#80c000;color:#4000cc">1 / 4<br>(25%)</div>
<div class="c" style="left:634px;top:218px;width:55px;background:#80c000;color:#4000cc">1 / 4<br>(25%)</div>
<div class="c" style="left:690px;top:218px;width:55px;background:#80c000;color:#4000cc">1 / 4<br>(25%)</div>
<div class="c" style="left:746px;top:218px;width:56px;background:#ffff00;color:#0000ff">2 / 4<br>(50%)</div>
<div class="c" style="left:803px;top:218px;width:55px;background:#ffff00;color:#0000ff">2 / 4<br>(50%)</div>
<div class="c" style="left:859px;top:218px;width:55px;background:#ffff00;color:#0000ff">2 / 4<br>(50%)</div>
<div class="c" style="left:915px;top:218px;width:55px;background:#ffff00;color:#0000ff">2 / 4<br>(50%)</div>
<div class="c" style="left:971px;top:218px;width:56px;background:#ffff00;color:#0000ff">2 / 4<br>(50%)</div>
<div class="c" style="left:1028px;top:218px;width:55px;background:#ffff00;color:#0000ff">2 / 4<br>(50%)</div>
<div class="c" style="left:1084px;top:218px;width:55px;background:#ffff00;color:#0000ff">2 / 4<br>(50%)</div>
<div class="c" style="left:1140px;top:218px;width:55px;background:#ffff00;color:#0000ff">2 / 4<br>(50%)</div>
<div class="c" style="left:1196px;top:218px;width:55px;background:#ffff00;color:#0000ff">2 / 4<br>(50%)</div>
<div class="c" style="left:1252px;top:218px;width:56px;background:#ffff00;color:#0000ff">2 / 4<br>(50%)</div>
<div class="c" style="left:1309px;top:218px;width:55px;background:#ffff00;color:#0000ff">2 / 4<br>(50%)</div>
<div class="c" style="left:1365px;top:218px;width:55px;background:#ffff00;color:#0000ff">2 / 4<br>(50%)</div>
<div class="c" style="left:1421px;top:218px;width:56px;background:#ffff00;color:#0000ff">2 / 4<br>(50%)</div>
<div class="t" style="left:12px;top:270px;font-size:12px;line-height:12px;font-weight:400;color:#000;">25 May, Wed</div>
<div class="c" style="left:128px;top:257px;width:55px;background:#ffff00;color:#0000ff">2 / 4<br>(50%)</div>
<div class="c" style="left:184px;top:257px;width:55px;background:#ffff00;color:#0000ff">2 / 4<br>(50%)</div>
<div class="c" style="left:240px;top:257px;width:56px;background:#ffff00;color:#0000ff">2 / 4<br>(50%)</div>
<div class="c" style="left:297px;top:257px;width:55px;background:#ffff00;color:#0000ff">2 / 4<br>(50%)</div>
<div class="c" style="left:353px;top:257px;width:55px;background:#ffff00;color:#0000ff">2 / 4<br>(50%)</div>
<div class="c" style="left:409px;top:257px;width:55px;background:#ffff00;color:#0000ff">2 / 4<br>(50%)</div>
<div class="c" style="left:465px;top:257px;width:56px;background:#ffff00;color:#0000ff">2 / 4<br>(50%)</div>
<div class="c" style="left:522px;top:257px;width:55px;background:#ffff00;color:#0000ff">2 / 4<br>(50%)</div>
<div class="c" style="left:578px;top:257px;width:55px;background:#ffff00;color:#0000ff">2 / 4<br>(50%)</div>
<div class="c" style="left:634px;top:257px;width:55px;background:#ffff00;color:#0000ff">2 / 4<br>(50%)</div>
<div class="c" style="left:690px;top:257px;width:55px;background:#ffff00;color:#0000ff">2 / 4<br>(50%)</div>
<div class="c" style="left:746px;top:257px;width:56px;background:#ffff00;color:#0000ff">2 / 4<br>(50%)</div>
<div class="c" style="left:803px;top:257px;width:55px;background:#ffff00;color:#0000ff">2 / 4<br>(50%)</div>
<div class="c" style="left:859px;top:257px;width:55px;background:#ffff00;color:#0000ff">2 / 4<br>(50%)</div>
<div class="c" style="left:915px;top:257px;width:55px;background:#ffff00;color:#0000ff">2 / 4<br>(50%)</div>
<div class="c" style="left:971px;top:257px;width:56px;background:#ffff00;color:#0000ff">2 / 4<br>(50%)</div>
<div class="c" style="left:1028px;top:257px;width:55px;background:#ffff00;color:#0000ff">2 / 4<br>(50%)</div>
<div class="c" style="left:1084px;top:257px;width:55px;background:#ffff00;color:#0000ff">2 / 4<br>(50%)</div>
<div class="c" style="left:1140px;top:257px;width:55px;background:#ffff00;color:#0000ff">2 / 4<br>(50%)</div>
<div class="c" style="left:1196px;top:257px;width:55px;background:#ffff00;color:#0000ff">2 / 4<br>(50%)</div>
<div class="c" style="left:1252px;top:257px;width:56px;background:#ffff00;color:#0000ff">2 / 4<br>(50%)</div>
<div class="c" style="left:1309px;top:257px;width:55px;background:#ffff00;color:#0000ff">2 / 4<br>(50%)</div>
<div class="c" style="left:1365px;top:257px;width:55px;background:#ffff00;color:#0000ff">2 / 4<br>(50%)</div>
<div class="c" style="left:1421px;top:257px;width:56px;background:#ffff00;color:#0000ff">2 / 4<br>(50%)</div>
<div class="t" style="left:12px;top:309px;font-size:12px;line-height:12px;font-weight:400;color:#000;">26 May, Thu</div>
<div class="c" style="left:128px;top:296px;width:55px;background:#ffff00;color:#0000ff">2 / 4<br>(50%)</div>
<div class="c" style="left:184px;top:296px;width:55px;background:#ffff00;color:#0000ff">2 / 4<br>(50%)</div>
<div class="c" style="left:240px;top:296px;width:56px;background:#ffff00;color:#0000ff">2 / 4<br>(50%)</div>
<div class="c" style="left:297px;top:296px;width:55px;background:#ffff00;color:#0000ff">2 / 4<br>(50%)</div>
<div class="c" style="left:353px;top:296px;width:55px;background:#ffff00;color:#0000ff">2 / 4<br>(50%)</div>
<div class="c" style="left:409px;top:296px;width:55px;background:#ffff00;color:#0000ff">2 / 4<br>(50%)</div>
<div class="c" style="left:465px;top:296px;width:56px;background:#ffff00;color:#0000ff">2 / 4<br>(50%)</div>
<div class="c" style="left:522px;top:296px;width:55px;background:#ffff00;color:#0000ff">2 / 4<br>(50%)</div>
<div class="c" style="left:578px;top:296px;width:55px;background:#ffff00;color:#0000ff">2 / 4<br>(50%)</div>
<div class="c" style="left:634px;top:296px;width:55px;background:#ffff00;color:#0000ff">2 / 4<br>(50%)</div>
<div class="c" style="left:690px;top:296px;width:55px;background:#ffff00;color:#0000ff">2 / 4<br>(50%)</div>
<div class="c" style="left:746px;top:296px;width:56px;background:#ffff00;color:#0000ff">2 / 4<br>(50%)</div>
<div class="c" style="left:803px;top:296px;width:55px;background:#80c000;color:#4000cc">1 / 4<br>(25%)</div>
<div class="c" style="left:859px;top:296px;width:55px;background:#80c000;color:#4000cc">1 / 4<br>(25%)</div>
<div class="c" style="left:915px;top:296px;width:55px;background:#80c000;color:#4000cc">1 / 4<br>(25%)</div>
<div class="c" style="left:971px;top:296px;width:56px;background:#80c000;color:#4000cc">1 / 4<br>(25%)</div>
<div class="c" style="left:1028px;top:296px;width:55px;background:#80c000;color:#4000cc">1 / 4<br>(25%)</div>
<div class="c" style="left:1084px;top:296px;width:55px;background:#80c000;color:#4000cc;opacity:.8">1 / 4<br>(25%)</div>
<div class="c" style="left:1140px;top:296px;width:55px;background:#80c000;color:#4000cc">1 / 4<br>(25%)</div>
<div class="c" style="left:1196px;top:296px;width:55px;background:#80c000;color:#4000cc">1 / 4<br>(25%)</div>
<div class="c" style="left:1252px;top:296px;width:56px;background:#80c000;color:#4000cc">1 / 4<br>(25%)</div>
<div class="c" style="left:1309px;top:296px;width:55px;background:#80c000;color:#4000cc">1 / 4<br>(25%)</div>
<div class="c" style="left:1365px;top:296px;width:55px;background:#80c000;color:#4000cc">1 / 4<br>(25%)</div>
<div class="c" style="left:1421px;top:296px;width:56px;background:#80c000;color:#4000cc">1 / 4<br>(25%)</div>
<div class="t" style="left:12px;top:348px;font-size:12px;line-height:12px;font-weight:400;color:#000;">27 May, Fri</div>
<div class="c" style="left:128px;top:335px;width:55px;background:#80c000;color:#4000cc">1 / 4<br>(25%)</div>
<div class="c" style="left:184px;top:335px;width:55px;background:#80c000;color:#4000cc">1 / 4<br>(25%)</div>
<div class="c" style="left:240px;top:335px;width:56px;background:#80c000;color:#4000cc">1 / 4<br>(25%)</div>
<div class="c" style="left:297px;top:335px;width:55px;background:#80c000;color:#4000cc">1 / 4<br>(25%)</div>
<div class="c" style="left:353px;top:335px;width:55px;background:#80c000;color:#4000cc">1 / 4<br>(25%)</div>
<div class="c" style="left:409px;top:335px;width:55px;background:#80c000;color:#4000cc">1 / 4<br>(25%)</div>
<div class="c" style="left:465px;top:335px;width:56px;background:#80c000;color:#4000cc">1 / 4<br>(25%)</div>
<div class="c" style="left:522px;top:335px;width:55px;background:#80c000;color:#4000cc">1 / 4<br>(25%)</div>
<div class="c" style="left:578px;top:335px;width:55px;background:#80c000;color:#4000cc">1 / 4<br>(25%)</div>
<div class="c" style="left:634px;top:335px;width:55px;background:#80c000;color:#4000cc">1 / 4<br>(25%)</div>
<div class="c" style="left:690px;top:335px;width:55px;background:#80c000;color:#4000cc">1 / 4<br>(25%)</div>
<div class="c" style="left:746px;top:335px;width:56px;background:#80c000;color:#4000cc">1 / 4<br>(25%)</div>
<div class="c" style="left:803px;top:335px;width:55px;background:#80c000;color:#4000cc">1 / 4<br>(25%)</div>
<div class="c" style="left:859px;top:335px;width:55px;background:#80c000;color:#4000cc">1 / 4<br>(25%)</div>
<div class="c" style="left:915px;top:335px;width:55px;background:#80c000;color:#4000cc">1 / 4<br>(25%)</div>
<div class="c" style="left:971px;top:335px;width:56px;background:#80c000;color:#4000cc">1 / 4<br>(25%)</div>
<div class="c" style="left:1028px;top:335px;width:55px;background:#80c000;color:#4000cc">1 / 4<br>(25%)</div>
<div class="c" style="left:1084px;top:335px;width:55px;background:#80c000;color:#4000cc">1 / 4<br>(25%)</div>
<div class="c" style="left:1140px;top:335px;width:55px;background:#80c000;color:#4000cc">1 / 4<br>(25%)</div>
<div class="c" style="left:1196px;top:335px;width:55px;background:#80c000;color:#4000cc">1 / 4<br>(25%)</div>
<div class="c" style="left:1252px;top:335px;width:56px;background:#80c000;color:#4000cc">1 / 4<br>(25%)</div>
<div class="c" style="left:1309px;top:335px;width:55px;background:#80c000;color:#4000cc">1 / 4<br>(25%)</div>
<div class="c" style="left:1365px;top:335px;width:55px;background:#80c000;color:#4000cc">1 / 4<br>(25%)</div>
<div class="c" style="left:1421px;top:335px;width:56px;background:#80c000;color:#4000cc">1 / 4<br>(25%)</div>
<div class="t" style="left:12px;top:387px;font-size:12px;line-height:12px;font-weight:400;color:#000;">28 May, Sat</div>
<div class="c" style="left:128px;top:374px;width:55px;background:#80c000;color:#4000cc">1 / 4<br>(25%)</div>
<div class="c" style="left:184px;top:374px;width:55px;background:#80c000;color:#4000cc">1 / 4<br>(25%)</div>
<div class="c" style="left:240px;top:374px;width:56px;background:#80c000;color:#4000cc">1 / 4<br>(25%)</div>
<div class="c" style="left:297px;top:374px;width:55px;background:#80c000;color:#4000cc">1 / 4<br>(25%)</div>
<div class="c" style="left:353px;top:374px;width:55px;background:#80c000;color:#4000cc">1 / 4<br>(25%)</div>
<div class="c" style="left:409px;top:374px;width:55px;background:#80c000;color:#4000cc">1 / 4<br>(25%)</div>
<div class="c" style="left:465px;top:374px;width:56px;background:#80c000;color:#4000cc">1 / 4<br>(25%)</div>
<div class="c" style="left:522px;top:374px;width:55px;background:#80c000;color:#4000cc">1 / 4<br>(25%)</div>
<div class="c" style="left:578px;top:374px;width:55px;background:#80c000;color:#4000cc">1 / 4<br>(25%)</div>
<div class="c" style="left:634px;top:374px;width:55px;background:#80c000;color:#4000cc">1 / 4<br>(25%)</div>
<div class="c" style="left:690px;top:374px;width:55px;background:#80c000;color:#4000cc">1 / 4<br>(25%)</div>
<div class="c" style="left:746px;top:374px;width:56px;background:#80c000;color:#4000cc">1 / 4<br>(25%)</div>
<div class="c" style="left:803px;top:374px;width:55px;background:#80c000;color:#4000cc">1 / 4<br>(25%)</div>
<div class="c" style="left:859px;top:374px;width:55px;background:#80c000;color:#4000cc">1 / 4<br>(25%)</div>
<div class="c" style="left:915px;top:374px;width:55px;background:#80c000;color:#4000cc">1 / 4<br>(25%)</div>
<div class="c" style="left:971px;top:374px;width:56px;background:#80c000;color:#4000cc">1 / 4<br>(25%)</div>
<div class="c" style="left:1028px;top:374px;width:55px;background:#80c000;color:#4000cc">1 / 4<br>(25%)</div>
<div class="c" style="left:1084px;top:374px;width:55px;background:#80c000;color:#4000cc">1 / 4<br>(25%)</div>
<div class="c" style="left:1140px;top:374px;width:55px;background:#80c000;color:#4000cc">1 / 4<br>(25%)</div>
<div class="c" style="left:1196px;top:374px;width:55px;background:#80c000;color:#4000cc">1 / 4<br>(25%)</div>
<div class="c" style="left:1252px;top:374px;width:56px;background:#80c000;color:#4000cc">1 / 4<br>(25%)</div>
<div class="c" style="left:1309px;top:374px;width:55px;background:#80c000;color:#4000cc">1 / 4<br>(25%)</div>
<div class="c" style="left:1365px;top:374px;width:55px;background:#80c000;color:#4000cc">1 / 4<br>(25%)</div>
<div class="c" style="left:1421px;top:374px;width:56px;background:#80c000;color:#4000cc">1 / 4<br>(25%)</div>
<div class="t" style="left:12px;top:426px;font-size:12px;line-height:12px;font-weight:400;color:#000;">29 May, Sun</div>
<div class="c" style="left:128px;top:413px;width:55px;background:#80c000;color:#4000cc">1 / 4<br>(25%)</div>
<div class="c" style="left:184px;top:413px;width:55px;background:#80c000;color:#4000cc">1 / 4<br>(25%)</div>
<div class="c" style="left:240px;top:413px;width:56px;background:#80c000;color:#4000cc">1 / 4<br>(25%)</div>
<div class="c" style="left:297px;top:413px;width:55px;background:#80c000;color:#4000cc">1 / 4<br>(25%)</div>
<div class="c" style="left:353px;top:413px;width:55px;background:#80c000;color:#4000cc">1 / 4<br>(25%)</div>
<div class="c" style="left:409px;top:413px;width:55px;background:#80c000;color:#4000cc">1 / 4<br>(25%)</div>
<div class="c" style="left:465px;top:413px;width:56px;background:#80c000;color:#4000cc">1 / 4<br>(25%)</div>
<div class="c" style="left:522px;top:413px;width:55px;background:#80c000;color:#4000cc">1 / 4<br>(25%)</div>
<div class="c" style="left:578px;top:413px;width:55px;background:#80c000;color:#4000cc">1 / 4<br>(25%)</div>
<div class="c" style="left:634px;top:413px;width:55px;background:#80c000;color:#4000cc">1 / 4<br>(25%)</div>
<div class="c" style="left:690px;top:413px;width:55px;background:#80c000;color:#4000cc">1 / 4<br>(25%)</div>
<div class="c" style="left:746px;top:413px;width:56px;background:#80c000;color:#4000cc">1 / 4<br>(25%)</div>
<div class="c" style="left:803px;top:413px;width:55px;background:#80c000;color:#4000cc">1 / 4<br>(25%)</div>
<div class="c" style="left:859px;top:413px;width:55px;background:#80c000;color:#4000cc">1 / 4<br>(25%)</div>
<div class="c" style="left:915px;top:413px;width:55px;background:#80c000;color:#4000cc">1 / 4<br>(25%)</div>
<div class="c" style="left:971px;top:413px;width:56px;background:#80c000;color:#4000cc">1 / 4<br>(25%)</div>
<div class="c" style="left:1028px;top:413px;width:55px;background:#80c000;color:#4000cc">1 / 4<br>(25%)</div>
<div class="c" style="left:1084px;top:413px;width:55px;background:#80c000;color:#4000cc">1 / 4<br>(25%)</div>
<div class="c" style="left:1140px;top:413px;width:55px;background:#80c000;color:#4000cc">1 / 4<br>(25%)</div>
<div class="c" style="left:1196px;top:413px;width:55px;background:#80c000;color:#4000cc">1 / 4<br>(25%)</div>
<div class="c" style="left:1252px;top:413px;width:56px;background:#80c000;color:#4000cc">1 / 4<br>(25%)</div>
<div class="c" style="left:1309px;top:413px;width:55px;background:#80c000;color:#4000cc">1 / 4<br>(25%)</div>
<div class="c" style="left:1365px;top:413px;width:55px;background:#80c000;color:#4000cc">1 / 4<br>(25%)</div>
<div class="c" style="left:1421px;top:413px;width:56px;background:#80c000;color:#4000cc">1 / 4<br>(25%)</div>
<div class="t" style="left:12px;top:465px;font-size:12px;line-height:12px;font-weight:400;color:#000;">30 May, Mon</div>
<div class="c" style="left:128px;top:452px;width:55px;background:#80c000;color:#4000cc">1 / 4<br>(25%)</div>
<div class="c" style="left:184px;top:452px;width:55px;background:#80c000;color:#4000cc">1 / 4<br>(25%)</div>
<div class="c" style="left:240px;top:452px;width:56px;background:#80c000;color:#4000cc">1 / 4<br>(25%)</div>
<div class="c" style="left:297px;top:452px;width:55px;background:#80c000;color:#4000cc">1 / 4<br>(25%)</div>
<div class="c" style="left:353px;top:452px;width:55px;background:#80c000;color:#4000cc">1 / 4<br>(25%)</div>
<div class="c" style="left:409px;top:452px;width:55px;background:#80c000;color:#4000cc">1 / 4<br>(25%)</div>
<div class="c" style="left:465px;top:452px;width:56px;background:#80c000;color:#4000cc">1 / 4<br>(25%)</div>
<div class="c" style="left:522px;top:452px;width:55px;background:#80c000;color:#4000cc">1 / 4<br>(25%)</div>
<div class="c" style="left:578px;top:452px;width:55px;background:#80c000;color:#4000cc">1 / 4<br>(25%)</div>
<div class="c" style="left:634px;top:452px;width:55px;background:#80c000;color:#4000cc">1 / 4<br>(25%)</div>
<div class="c" style="left:690px;top:452px;width:55px;background:#ffff00;color:#0000ff">2 / 4<br>(50%)</div>
<div class="c" style="left:746px;top:452px;width:56px;background:#ffff00;color:#0000ff">2 / 4<br>(50%)</div>
<div class="c" style="left:803px;top:452px;width:55px;background:#ffff00;color:#0000ff">2 / 4<br>(50%)</div>
<div class="c" style="left:859px;top:452px;width:55px;background:#ffff00;color:#0000ff">2 / 4<br>(50%)</div>
<div class="c" style="left:915px;top:452px;width:55px;background:#ffff00;color:#0000ff">2 / 4<br>(50%)</div>
<div class="c" style="left:971px;top:452px;width:56px;background:#ffff00;color:#0000ff">2 / 4<br>(50%)</div>
<div class="c" style="left:1028px;top:452px;width:55px;background:#ffff00;color:#0000ff">2 / 4<br>(50%)</div>
<div class="c" style="left:1084px;top:452px;width:55px;background:#ffff00;color:#0000ff">2 / 4<br>(50%)</div>
<div class="c" style="left:1140px;top:452px;width:55px;background:#ffff00;color:#0000ff">2 / 4<br>(50%)</div>
<div class="c" style="left:1196px;top:452px;width:55px;background:#ffff00;color:#0000ff">2 / 4<br>(50%)</div>
<div class="c" style="left:1252px;top:452px;width:56px;background:#ffff00;color:#0000ff">2 / 4<br>(50%)</div>
<div class="c" style="left:1309px;top:452px;width:55px;background:#ffff00;color:#0000ff">2 / 4<br>(50%)</div>
<div class="c" style="left:1365px;top:452px;width:55px;background:#ffff00;color:#0000ff">2 / 4<br>(50%)</div>
<div class="c" style="left:1421px;top:452px;width:56px;background:#ffff00;color:#0000ff">2 / 4<br>(50%)</div>
<div class="t" style="left:12px;top:504px;font-size:12px;line-height:12px;font-weight:400;color:#000;">31 May, Tue</div>
<div class="c" style="left:128px;top:491px;width:55px;background:#ffff00;color:#0000ff">2 / 4<br>(50%)</div>
<div class="c" style="left:184px;top:491px;width:55px;background:#ffff00;color:#0000ff">2 / 4<br>(50%)</div>
<div class="c" style="left:240px;top:491px;width:56px;background:#ffff00;color:#0000ff">2 / 4<br>(50%)</div>
<div class="c" style="left:297px;top:491px;width:55px;background:#ffff00;color:#0000ff">2 / 4<br>(50%)</div>
<div class="c" style="left:353px;top:491px;width:55px;background:#ffff00;color:#0000ff">2 / 4<br>(50%)</div>
<div class="c" style="left:409px;top:491px;width:55px;background:#ffff00;color:#0000ff">2 / 4<br>(50%)</div>
<div class="c" style="left:465px;top:491px;width:56px;background:#ffff00;color:#0000ff">2 / 4<br>(50%)</div>
<div class="c" style="left:522px;top:491px;width:55px;background:#ffff00;color:#0000ff">2 / 4<br>(50%)</div>
<div class="c" style="left:578px;top:491px;width:55px;background:#ffff00;color:#0000ff">2 / 4<br>(50%)</div>
<div class="c" style="left:634px;top:491px;width:55px;background:#ffff00;color:#0000ff">2 / 4<br>(50%)</div>
<div class="c" style="left:690px;top:491px;width:55px;background:#ffff00;color:#0000ff">2 / 4<br>(50%)</div>
<div class="c" style="left:746px;top:491px;width:56px;background:#ffff00;color:#0000ff">2 / 4<br>(50%)</div>
<div class="c" style="left:803px;top:491px;width:55px;background:#ffff00;color:#0000ff">2 / 4<br>(50%)</div>
<div class="c" style="left:859px;top:491px;width:55px;background:#ffff00;color:#0000ff">2 / 4<br>(50%)</div>
<div class="c" style="left:915px;top:491px;width:55px;background:#80c000;color:#4000cc">1 / 4<br>(25%)</div>
<div class="c" style="left:971px;top:491px;width:56px;background:#80c000;color:#4000cc">1 / 4<br>(25%)</div>
<div class="c" style="left:1028px;top:491px;width:55px;background:#80c000;color:#4000cc">1 / 4<br>(25%)</div>
<div class="c" style="left:1084px;top:491px;width:55px;background:#80c000;color:#4000cc">1 / 4<br>(25%)</div>
<div class="c" style="left:1140px;top:491px;width:55px;background:#80c000;color:#4000cc">1 / 4<br>(25%)</div>
<div class="c" style="left:1196px;top:491px;width:55px;background:#80c000;color:#4000cc">1 / 4<br>(25%)</div>
<div class="c" style="left:1252px;top:491px;width:56px;background:#80c000;color:#4000cc">1 / 4<br>(25%)</div>
<div class="c" style="left:1309px;top:491px;width:55px;background:#80c000;color:#4000cc">1 / 4<br>(25%)</div>
<div class="c" style="left:1365px;top:491px;width:55px;background:#80c000;color:#4000cc">1 / 4<br>(25%)</div>
<div class="c" style="left:1421px;top:491px;width:56px;background:#80c000;color:#4000cc">1 / 4<br>(25%)</div>
<div class="t" style="left:12px;top:543px;font-size:12px;line-height:12px;font-weight:400;color:#000;">1 June, Wed</div>
<div class="c" style="left:128px;top:530px;width:55px;background:#80c000;color:#4000cc">1 / 4<br>(25%)</div>
<div class="c" style="left:184px;top:530px;width:55px;background:#80c000;color:#4000cc">1 / 4<br>(25%)</div>
<div class="c" style="left:240px;top:530px;width:56px;background:#80c000;color:#4000cc">1 / 4<br>(25%)</div>
<div class="c" style="left:297px;top:530px;width:55px;background:#80c000;color:#4000cc">1 / 4<br>(25%)</div>
<div class="c" style="left:353px;top:530px;width:55px;background:#80c000;color:#4000cc">1 / 4<br>(25%)</div>
<div class="c" style="left:409px;top:530px;width:55px;background:#80c000;color:#4000cc">1 / 4<br>(25%)</div>
<div class="c" style="left:465px;top:530px;width:56px;background:#80c000;color:#4000cc">1 / 4<br>(25%)</div>
<div class="c" style="left:522px;top:530px;width:55px;background:#80c000;color:#4000cc">1 / 4<br>(25%)</div>
<div class="c" style="left:578px;top:530px;width:55px;background:#80c000;color:#4000cc">1 / 4<br>(25%)</div>
<div class="c" style="left:634px;top:530px;width:55px;background:#80c000;color:#4000cc">1 / 4<br>(25%)</div>
<div class="c" style="left:690px;top:530px;width:55px;background:#80c000;color:#4000cc">1 / 4<br>(25%)</div>
<div class="c" style="left:746px;top:530px;width:56px;background:#80c000;color:#4000cc">1 / 4<br>(25%)</div>
<div class="c" style="left:803px;top:530px;width:55px;background:#80c000;color:#4000cc">1 / 4<br>(25%)</div>
<div class="c" style="left:859px;top:530px;width:55px;background:#80c000;color:#4000cc">1 / 4<br>(25%)</div>
<div class="c" style="left:915px;top:530px;width:55px;background:#80c000;color:#4000cc">1 / 4<br>(25%)</div>
<div class="c" style="left:971px;top:530px;width:56px;background:#80c000;color:#4000cc">1 / 4<br>(25%)</div>
<div class="c" style="left:1028px;top:530px;width:55px;background:#80c000;color:#4000cc">1 / 4<br>(25%)</div>
<div class="c" style="left:1084px;top:530px;width:55px;background:#80c000;color:#4000cc">1 / 4<br>(25%)</div>
<div class="c" style="left:1140px;top:530px;width:55px;background:#80c000;color:#4000cc">1 / 4<br>(25%)</div>
<div class="c" style="left:1196px;top:530px;width:55px;background:#80c000;color:#4000cc">1 / 4<br>(25%)</div>
<div class="c" style="left:1252px;top:530px;width:56px;background:#80c000;color:#4000cc">1 / 4<br>(25%)</div>
<div class="c" style="left:1309px;top:530px;width:55px;background:#80c000;color:#4000cc">1 / 4<br>(25%)</div>
<div class="c" style="left:1365px;top:530px;width:55px;background:#80c000;color:#4000cc">1 / 4<br>(25%)</div>
<div class="c" style="left:1421px;top:530px;width:56px;background:#80c000;color:#4000cc">1 / 4<br>(25%)</div>
<div class="t" style="left:12px;top:582px;font-size:12px;line-height:12px;font-weight:400;color:#000;">2 June, Thu</div>
<div class="c" style="left:128px;top:569px;width:55px;background:#80c000;color:#4000cc">1 / 4<br>(25%)</div>
<div class="c" style="left:184px;top:569px;width:55px;background:#80c000;color:#4000cc">1 / 4<br>(25%)</div>
<div class="c" style="left:240px;top:569px;width:56px;background:#80c000;color:#4000cc">1 / 4<br>(25%)</div>
<div class="c" style="left:297px;top:569px;width:55px;background:#80c000;color:#4000cc">1 / 4<br>(25%)</div>
<div class="c" style="left:353px;top:569px;width:55px;background:#80c000;color:#4000cc">1 / 4<br>(25%)</div>
<div class="c" style="left:409px;top:569px;width:55px;background:#80c000;color:#4000cc">1 / 4<br>(25%)</div>
<div class="c" style="left:465px;top:569px;width:56px;background:#80c000;color:#4000cc">1 / 4<br>(25%)</div>
<div class="c" style="left:522px;top:569px;width:55px;background:#80c000;color:#4000cc">1 / 4<br>(25%)</div>
<div class="c" style="left:578px;top:569px;width:55px;background:#80c000;color:#4000cc">1 / 4<br>(25%)</div>
<div class="c" style="left:634px;top:569px;width:55px;background:#80c000;color:#4000cc">1 / 4<br>(25%)</div>
<div class="c" style="left:690px;top:569px;width:55px;background:#80c000;color:#4000cc">1 / 4<br>(25%)</div>
<div class="c" style="left:746px;top:569px;width:56px;background:#80c000;color:#4000cc">1 / 4<br>(25%)</div>
<div class="c" style="left:803px;top:569px;width:55px;background:#80c000;color:#4000cc">1 / 4<br>(25%)</div>
<div class="c" style="left:859px;top:569px;width:55px;background:#80c000;color:#4000cc">1 / 4<br>(25%)</div>
<div class="c" style="left:915px;top:569px;width:55px;background:#80c000;color:#4000cc">1 / 4<br>(25%)</div>
<div class="c" style="left:971px;top:569px;width:56px;background:#80c000;color:#4000cc">1 / 4<br>(25%)</div>
<div class="c" style="left:1028px;top:569px;width:55px;background:#80c000;color:#4000cc">1 / 4<br>(25%)</div>
<div class="c" style="left:1084px;top:569px;width:55px;background:#80c000;color:#4000cc">1 / 4<br>(25%)</div>
<div class="c" style="left:1140px;top:569px;width:55px;background:#80c000;color:#4000cc">1 / 4<br>(25%)</div>
<div class="c" style="left:1196px;top:569px;width:55px;background:#80c000;color:#4000cc">1 / 4<br>(25%)</div>
<div class="c" style="left:1252px;top:569px;width:56px;background:#80c000;color:#4000cc">1 / 4<br>(25%)</div>
<div class="c" style="left:1309px;top:569px;width:55px;background:#80c000;color:#4000cc">1 / 4<br>(25%)</div>
<div class="c" style="left:1365px;top:569px;width:55px;background:#80c000;color:#4000cc">1 / 4<br>(25%)</div>
<div class="c" style="left:1421px;top:569px;width:56px;background:#80c000;color:#4000cc">1 / 4<br>(25%)</div>
<div class="t" style="left:12px;top:621px;font-size:12px;line-height:12px;font-weight:400;color:#000;">3 June, Fri</div>
<div class="c" style="left:128px;top:608px;width:55px;background:#80c000;color:#4000cc">1 / 4<br>(25%)</div>
<div class="c" style="left:184px;top:608px;width:55px;background:#80c000;color:#4000cc">1 / 4<br>(25%)</div>
<div class="c" style="left:240px;top:608px;width:56px;background:#80c000;color:#4000cc">1 / 4<br>(25%)</div>
<div class="c" style="left:297px;top:608px;width:55px;background:#80c000;color:#4000cc">1 / 4<br>(25%)</div>
<div class="c" style="left:353px;top:608px;width:55px;background:#80c000;color:#4000cc">1 / 4<br>(25%)</div>
<div class="c" style="left:409px;top:608px;width:55px;background:#80c000;color:#4000cc">1 / 4<br>(25%)</div>
<div class="c" style="left:465px;top:608px;width:56px;background:#80c000;color:#4000cc">1 / 4<br>(25%)</div>
<div class="c" style="left:522px;top:608px;width:55px;background:#80c000;color:#4000cc">1 / 4<br>(25%)</div>
<div class="c" style="left:578px;top:608px;width:55px;background:#80c000;color:#4000cc">1 / 4<br>(25%)</div>
<div class="c" style="left:634px;top:608px;width:55px;background:#80c000;color:#4000cc">1 / 4<br>(25%)</div>
<div class="c" style="left:690px;top:608px;width:55px;background:#80c000;color:#4000cc">1 / 4<br>(25%)</div>
<div class="c" style="left:746px;top:608px;width:56px;background:#80c000;color:#4000cc">1 / 4<br>(25%)</div>
<div class="c" style="left:803px;top:608px;width:55px;background:#80c000;color:#4000cc">1 / 4<br>(25%)</div>
<div class="c" style="left:859px;top:608px;width:55px;background:#80c000;color:#4000cc">1 / 4<br>(25%)</div>
<div class="c" style="left:915px;top:608px;width:55px;background:#80c000;color:#4000cc">1 / 4<br>(25%)</div>
<div class="c" style="left:971px;top:608px;width:56px;background:#80c000;color:#4000cc">1 / 4<br>(25%)</div>
<div class="c" style="left:1028px;top:608px;width:55px;background:#80c000;color:#4000cc">1 / 4<br>(25%)</div>
<div class="c" style="left:1084px;top:608px;width:55px;background:#80c000;color:#4000cc">1 / 4<br>(25%)</div>
<div class="c" style="left:1140px;top:608px;width:55px;background:#80c000;color:#4000cc">1 / 4<br>(25%)</div>
<div class="c" style="left:1196px;top:608px;width:55px;background:#80c000;color:#4000cc">1 / 4<br>(25%)</div>
<div class="c" style="left:1252px;top:608px;width:56px;background:#80c000;color:#4000cc">1 / 4<br>(25%)</div>
<div class="c" style="left:1309px;top:608px;width:55px;background:#80c000;color:#4000cc">1 / 4<br>(25%)</div>
<div class="c" style="left:1365px;top:608px;width:55px;background:#80c000;color:#4000cc">1 / 4<br>(25%)</div>
<div class="c" style="left:1421px;top:608px;width:56px;background:#80c000;color:#4000cc">1 / 4<br>(25%)</div>
<div class="t" style="left:12px;top:660px;font-size:12px;line-height:12px;font-weight:400;color:#000;">4 June, Sat</div>
<div class="c" style="left:128px;top:647px;width:55px;background:#80c000;color:#4000cc">1 / 4<br>(25%)</div>
<div class="c" style="left:184px;top:647px;width:55px;background:#80c000;color:#4000cc">1 / 4<br>(25%)</div>
<div class="c" style="left:240px;top:647px;width:56px;background:#80c000;color:#4000cc">1 / 4<br>(25%)</div>
<div class="c" style="left:297px;top:647px;width:55px;background:#80c000;color:#4000cc">1 / 4<br>(25%)</div>
<div class="c" style="left:353px;top:647px;width:55px;background:#80c000;color:#4000cc">1 / 4<br>(25%)</div>
<div class="c" style="left:409px;top:647px;width:55px;background:#80c000;color:#4000cc">1 / 4<br>(25%)</div>
<div class="c" style="left:465px;top:647px;width:56px;background:#80c000;color:#4000cc">1 / 4<br>(25%)</div>
<div class="c" style="left:522px;top:647px;width:55px;background:#80c000;color:#4000cc">1 / 4<br>(25%)</div>
<div class="c" style="left:578px;top:647px;width:55px;background:#80c000;color:#4000cc">1 / 4<br>(25%)</div>
<div class="c" style="left:634px;top:647px;width:55px;background:#80c000;color:#4000cc">1 / 4<br>(25%)</div>
<div class="c" style="left:690px;top:647px;width:55px;background:#80c000;color:#4000cc">1 / 4<br>(25%)</div>
<div class="c" style="left:746px;top:647px;width:56px;background:#80c000;color:#4000cc">1 / 4<br>(25%)</div>
<div class="c" style="left:803px;top:647px;width:55px;background:#80c000;color:#4000cc">1 / 4<br>(25%)</div>
<div class="c" style="left:859px;top:647px;width:55px;background:#80c000;color:#4000cc">1 / 4<br>(25%)</div>
<div class="c" style="left:915px;top:647px;width:55px;background:#80c000;color:#4000cc">1 / 4<br>(25%)</div>
<div class="c" style="left:971px;top:647px;width:56px;background:#80c000;color:#4000cc">1 / 4<br>(25%)</div>
<div class="c" style="left:1028px;top:647px;width:55px;background:#80c000;color:#4000cc">1 / 4<br>(25%)</div>
<div class="c" style="left:1084px;top:647px;width:55px;background:#80c000;color:#4000cc">1 / 4<br>(25%)</div>
<div class="c" style="left:1140px;top:647px;width:55px;background:#80c000;color:#4000cc">1 / 4<br>(25%)</div>
<div class="c" style="left:1196px;top:647px;width:55px;background:#80c000;color:#4000cc">1 / 4<br>(25%)</div>
<div class="c" style="left:1252px;top:647px;width:56px;background:#80c000;color:#4000cc">1 / 4<br>(25%)</div>
<div class="c" style="left:1309px;top:647px;width:55px;background:#80c000;color:#4000cc">1 / 4<br>(25%)</div>
<div class="c" style="left:1365px;top:647px;width:55px;background:#80c000;color:#4000cc">1 / 4<br>(25%)</div>
<div class="c" style="left:1421px;top:647px;width:56px;background:#80c000;color:#4000cc">1 / 4<br>(25%)</div>
<div class="t" style="left:12px;top:699px;font-size:12px;line-height:12px;font-weight:400;color:#000;">5 June, Sun</div>
<div class="c" style="left:128px;top:686px;width:55px;background:#80c000;color:#4000cc">1 / 4<br>(25%)</div>
<div class="c" style="left:184px;top:686px;width:55px;background:#80c000;color:#4000cc">1 / 4<br>(25%)</div>
<div class="c" style="left:240px;top:686px;width:56px;background:#80c000;color:#4000cc">1 / 4<br>(25%)</div>
<div class="c" style="left:297px;top:686px;width:55px;background:#80c000;color:#4000cc">1 / 4<br>(25%)</div>
<div class="c" style="left:353px;top:686px;width:55px;background:#80c000;color:#4000cc">1 / 4<br>(25%)</div>
<div class="c" style="left:409px;top:686px;width:55px;background:#80c000;color:#4000cc">1 / 4<br>(25%)</div>
<div class="c" style="left:465px;top:686px;width:56px;background:#80c000;color:#4000cc">1 / 4<br>(25%)</div>
<div class="c" style="left:522px;top:686px;width:55px;background:#80c000;color:#4000cc">1 / 4<br>(25%)</div>
<div class="c" style="left:578px;top:686px;width:55px;background:#80c000;color:#4000cc">1 / 4<br>(25%)</div>
<div class="c" style="left:634px;top:686px;width:55px;background:#80c000;color:#4000cc">1 / 4<br>(25%)</div>
<div class="c" style="left:690px;top:686px;width:55px;background:#80c000;color:#4000cc">1 / 4<br>(25%)</div>
<div class="c" style="left:746px;top:686px;width:56px;background:#80c000;color:#4000cc">1 / 4<br>(25%)</div>
<div class="c" style="left:803px;top:686px;width:55px;background:#80c000;color:#4000cc">1 / 4<br>(25%)</div>
<div class="c" style="left:859px;top:686px;width:55px;background:#80c000;color:#4000cc">1 / 4<br>(25%)</div>
<div class="c" style="left:915px;top:686px;width:55px;background:#80c000;color:#4000cc">1 / 4<br>(25%)</div>
<div class="c" style="left:971px;top:686px;width:56px;background:#80c000;color:#4000cc">1 / 4<br>(25%)</div>
<div class="c" style="left:1028px;top:686px;width:55px;background:#80c000;color:#4000cc">1 / 4<br>(25%)</div>
<div class="c" style="left:1084px;top:686px;width:55px;background:#80c000;color:#4000cc">1 / 4<br>(25%)</div>
<div class="c" style="left:1140px;top:686px;width:55px;background:#80c000;color:#4000cc">1 / 4<br>(25%)</div>
<div class="c" style="left:1196px;top:686px;width:55px;background:#80c000;color:#4000cc">1 / 4<br>(25%)</div>
<div class="c" style="left:1252px;top:686px;width:56px;background:#80c000;color:#4000cc">1 / 4<br>(25%)</div>
<div class="c" style="left:1309px;top:686px;width:55px;background:#80c000;color:#4000cc">1 / 4<br>(25%)</div>
<div class="c" style="left:1365px;top:686px;width:55px;background:#80c000;color:#4000cc">1 / 4<br>(25%)</div>
<div class="c" style="left:1421px;top:686px;width:56px;background:#80c000;color:#4000cc">1 / 4<br>(25%)</div>
</div>
<div style="position:absolute;left:1898px;top:126px;width:17px;height:733px;background:#f0f0f0"></div>
<div style="position:absolute;left:1900px;top:818px;width:13px;height:41px;background:#c1c1c1"></div>
<div style="position:absolute;left:1883px;top:865px;width:22px;height:22px;border:1px solid #d6d6d6;border-radius:2px;background:linear-gradient(#fafafa,#f3f3f3 50%,#e9e9e9 50%,#e6e6e6)"></div>
<svg style="position:absolute;left:1887px;top:868px" width="16" height="16" viewBox="0 0 16 16"><path d="M6.3 0.5 H9.7 V5 H13 L8 10 L3 5 H6.3z" fill="#555"/><path d="M0.5 9 H4.5 L8 12.5 L11.5 9 H15.5 V14.5 H0.5z" fill="#555"/><rect x="11" y="11" width="1.2" height="2" fill="#ddd"/><rect x="13" y="11" width="1.2" height="2" fill="#ddd"/></svg>
<div style="position:absolute;left:0px;top:900px;width:1917px;height:25px;background:linear-gradient(#dedcdc,#e6e6e6 2px,#f6f6f6 6px,#fff 8px)"></div>
<div style="position:absolute;left:1px;top:902px;width:92px;height:23px;border:1px solid #dcdcdc;border-bottom:none;border-radius:3px 3px 0 0;background:linear-gradient(#fafafa,#f4f4f4 50%,#ececec 50%,#ebebeb)"></div>
<svg style="position:absolute;left:10px;top:903px" width="28" height="24" viewBox="0 0 28 24">
<path d="M14.96 5.1 A8.4 6.8 0 1 1 5.13 11.21" fill="none" stroke="#333" stroke-width="2.4" stroke-linecap="round"/>
<rect x="9" y="7.6" width="9.4" height="7.4" rx="3.4" fill="#0d8fe0"/></svg>
<div class="t" style="left:39px;top:908px;font-size:13.5px;line-height:13.5px;font-weight:700;color:#555;">Start</div>
<svg style="position:absolute;left:77px;top:912px" width="9" height="5"><path d="M0 0 L9 0 L4.5 4.5z" fill="#999"/></svg>
<div style="position:absolute;left:171px;top:907px;width:1px;height:14px;background:#ddd"></div>
<div style="position:absolute;left:201px;top:902px;width:158px;height:23px;border:1px solid #d8d8d8;border-bottom:none;border-radius:4px 4px 0 0;background:linear-gradient(#f7f7f7,#f4f4f4 50%,#ececec 50%,#eeeeee)"></div>
<svg style="position:absolute;left:244px;top:906px" width="16" height="16" viewBox="0 0 16 16"><path d="M9.2 2.2 A6 6 0 1 1 2.3 7" fill="none" stroke="#fff" stroke-width="2.6" stroke-linecap="round"/><rect x="5" y="5.4" width="6.2" height="5.4" rx="2.6" fill="#fff"/></svg>
<div class="t" style="left:266px;top:908px;font-size:12px;line-height:12px;font-weight:700;color:#555;">Projects</div>
<div style="position:absolute;left:369px;top:902px;width:158px;height:23px;border:1px solid #d8d8d8;border-bottom:none;border-radius:4px 4px 0 0;background:linear-gradient(#f7f7f7,#f4f4f4 50%,#ececec 50%,#eeeeee)"></div>
<svg style="position:absolute;left:375px;top:906px" width="16" height="16" viewBox="0 0 16 16"><path d="M9.2 2.2 A6 6 0 1 1 2.3 7" fill="none" stroke="#fff" stroke-width="2.6" stroke-linecap="round"/><rect x="5" y="5.4" width="6.2" height="5.4" rx="2.6" fill="#fff"/></svg>
<div class="t" style="left:397px;top:908px;font-size:12px;line-height:12px;font-weight:700;color:#555;">Currently Consume...</div>
<div style="position:absolute;left:537px;top:902px;width:158px;height:23px;border:1px solid #d8d8d8;border-bottom:none;border-radius:4px 4px 0 0;background:linear-gradient(#f7f7f7,#f4f4f4 50%,#ececec 50%,#eeeeee)"></div>
<svg style="position:absolute;left:550px;top:906px" width="16" height="16" viewBox="0 0 16 16"><path d="M9.2 2.2 A6 6 0 1 1 2.3 7" fill="none" stroke="#fff" stroke-width="2.6" stroke-linecap="round"/><rect x="5" y="5.4" width="6.2" height="5.4" rx="2.6" fill="#fff"/></svg>
<div class="t" style="left:572px;top:908px;font-size:12px;line-height:12px;font-weight:700;color:#555;">Released Licenses</div>
<div style="position:absolute;left:705px;top:902px;width:158px;height:23px;border:1px solid #d8d8d8;border-bottom:none;border-radius:4px 4px 0 0;background:linear-gradient(#f7f7f7,#f4f4f4 50%,#ececec 50%,#eeeeee)"></div>
<svg style="position:absolute;left:732px;top:906px" width="16" height="16" viewBox="0 0 16 16"><path d="M9.2 2.2 A6 6 0 1 1 2.3 7" fill="none" stroke="#fff" stroke-width="2.6" stroke-linecap="round"/><rect x="5" y="5.4" width="6.2" height="5.4" rx="2.6" fill="#fff"/></svg>
<div class="t" style="left:754px;top:908px;font-size:12px;line-height:12px;font-weight:700;color:#555;">Project Usage</div>
<div style="position:absolute;left:873px;top:902px;width:158px;height:23px;border:1px solid #d8d8d8;border-bottom:none;border-radius:4px 4px 0 0;background:linear-gradient(#f7f7f7,#f4f4f4 50%,#ececec 50%,#eeeeee)"></div>
<svg style="position:absolute;left:902px;top:906px" width="16" height="16" viewBox="0 0 16 16"><path d="M9.2 2.2 A6 6 0 1 1 2.3 7" fill="none" stroke="#fff" stroke-width="2.6" stroke-linecap="round"/><rect x="5" y="5.4" width="6.2" height="5.4" rx="2.6" fill="#fff"/></svg>
<div class="t" style="left:924px;top:908px;font-size:12px;line-height:12px;font-weight:700;color:#555;">Group Usage</div>
<div style="position:absolute;left:1041px;top:902px;width:158px;height:23px;border:1px solid #c8c8c8;border-bottom:none;border-radius:4px 4px 0 0;background:linear-gradient(#dbdbdb,#d9d9d9 50%,#e2e2e2 50%,#e2e2e2)"></div>
<svg style="position:absolute;left:1066px;top:906px" width="16" height="16" viewBox="0 0 16 16"><path d="M9.2 2.2 A6 6 0 1 1 2.3 7" fill="none" stroke="#fff" stroke-width="2.6" stroke-linecap="round"/><rect x="5" y="5.4" width="6.2" height="5.4" rx="2.6" fill="#fff"/></svg>
<div class="t" style="left:1088px;top:908px;font-size:12px;line-height:12px;font-weight:700;color:#555;">License Usage</div>
<div style="position:absolute;left:1799px;top:907px;width:1px;height:14px;background:#ddd"></div>
<svg style="position:absolute;left:1812px;top:902px" width="28" height="20" viewBox="0 0 28 20">
<rect x="0.5" y="5.5" width="21.5" height="14" fill="#000"/>
<path d="M1 6.5 L11.2 14 L21.5 6.5 M1 19 L8 12.5 M21.5 19 L14.5 12.5" fill="none" stroke="#fff" stroke-width="1"/>
<rect x="16.5" y="0.5" width="10.5" height="11" rx="1.5" fill="#d81e1e"/>
<text x="21.7" y="9.5" font-family="Liberation Sans" font-size="8.5" font-weight="700" fill="#fff" text-anchor="middle">1</text></svg>
<div class="t" style="left:1851px;top:907px;font-size:13px;line-height:13px;font-weight:400;color:#333;">5:44 PM</div>
<div style="position:absolute;left:1549px;top:795px;width:250px;height:43px;background:#fff;border-radius:12px;box-shadow:0 2px 8px rgba(0,0,0,.25)"></div>
<svg style="position:absolute;left:1755px;top:837px" width="28" height="15"><path d="M0 0 L27 0 L14 14z" fill="#fff"/></svg>
<div class="t" style="left:1576px;top:810px;font-size:14.4px;line-height:14.4px;font-weight:400;color:#3c3c3c;">Let us know how we can help?</div>
<svg style="position:absolute;left:1780px;top:802px" width="12" height="12" viewBox="0 0 12 12"><path d="M1.5 1.5 L10.5 10.5 M10.5 1.5 L1.5 10.5" stroke="#111" stroke-width="2.2"/></svg>
<svg style="position:absolute;left:1739px;top:853px" width="60" height="60" viewBox="0 0 60 60">
<circle cx="30" cy="30" r="30" fill="#22b52d"/>
<path d="M19.5 22 C21 17 27 14 34 14 C42 14 48.5 19.5 48.5 27 C48.5 32 46 35.5 42.8 37.6 L44.3 45.5 L37 40" fill="none" stroke="#fff" stroke-width="2" stroke-linejoin="round"/>
<rect x="9.3" y="21.9" width="26" height="18.2" rx="4.5" fill="#22b52d"/>
<rect x="10.3" y="22.9" width="24" height="16.2" rx="3.5" fill="#fff"/>
<path d="M15.5 38 L16 45 L24 38z" fill="#fff"/></svg>
</body></html>
